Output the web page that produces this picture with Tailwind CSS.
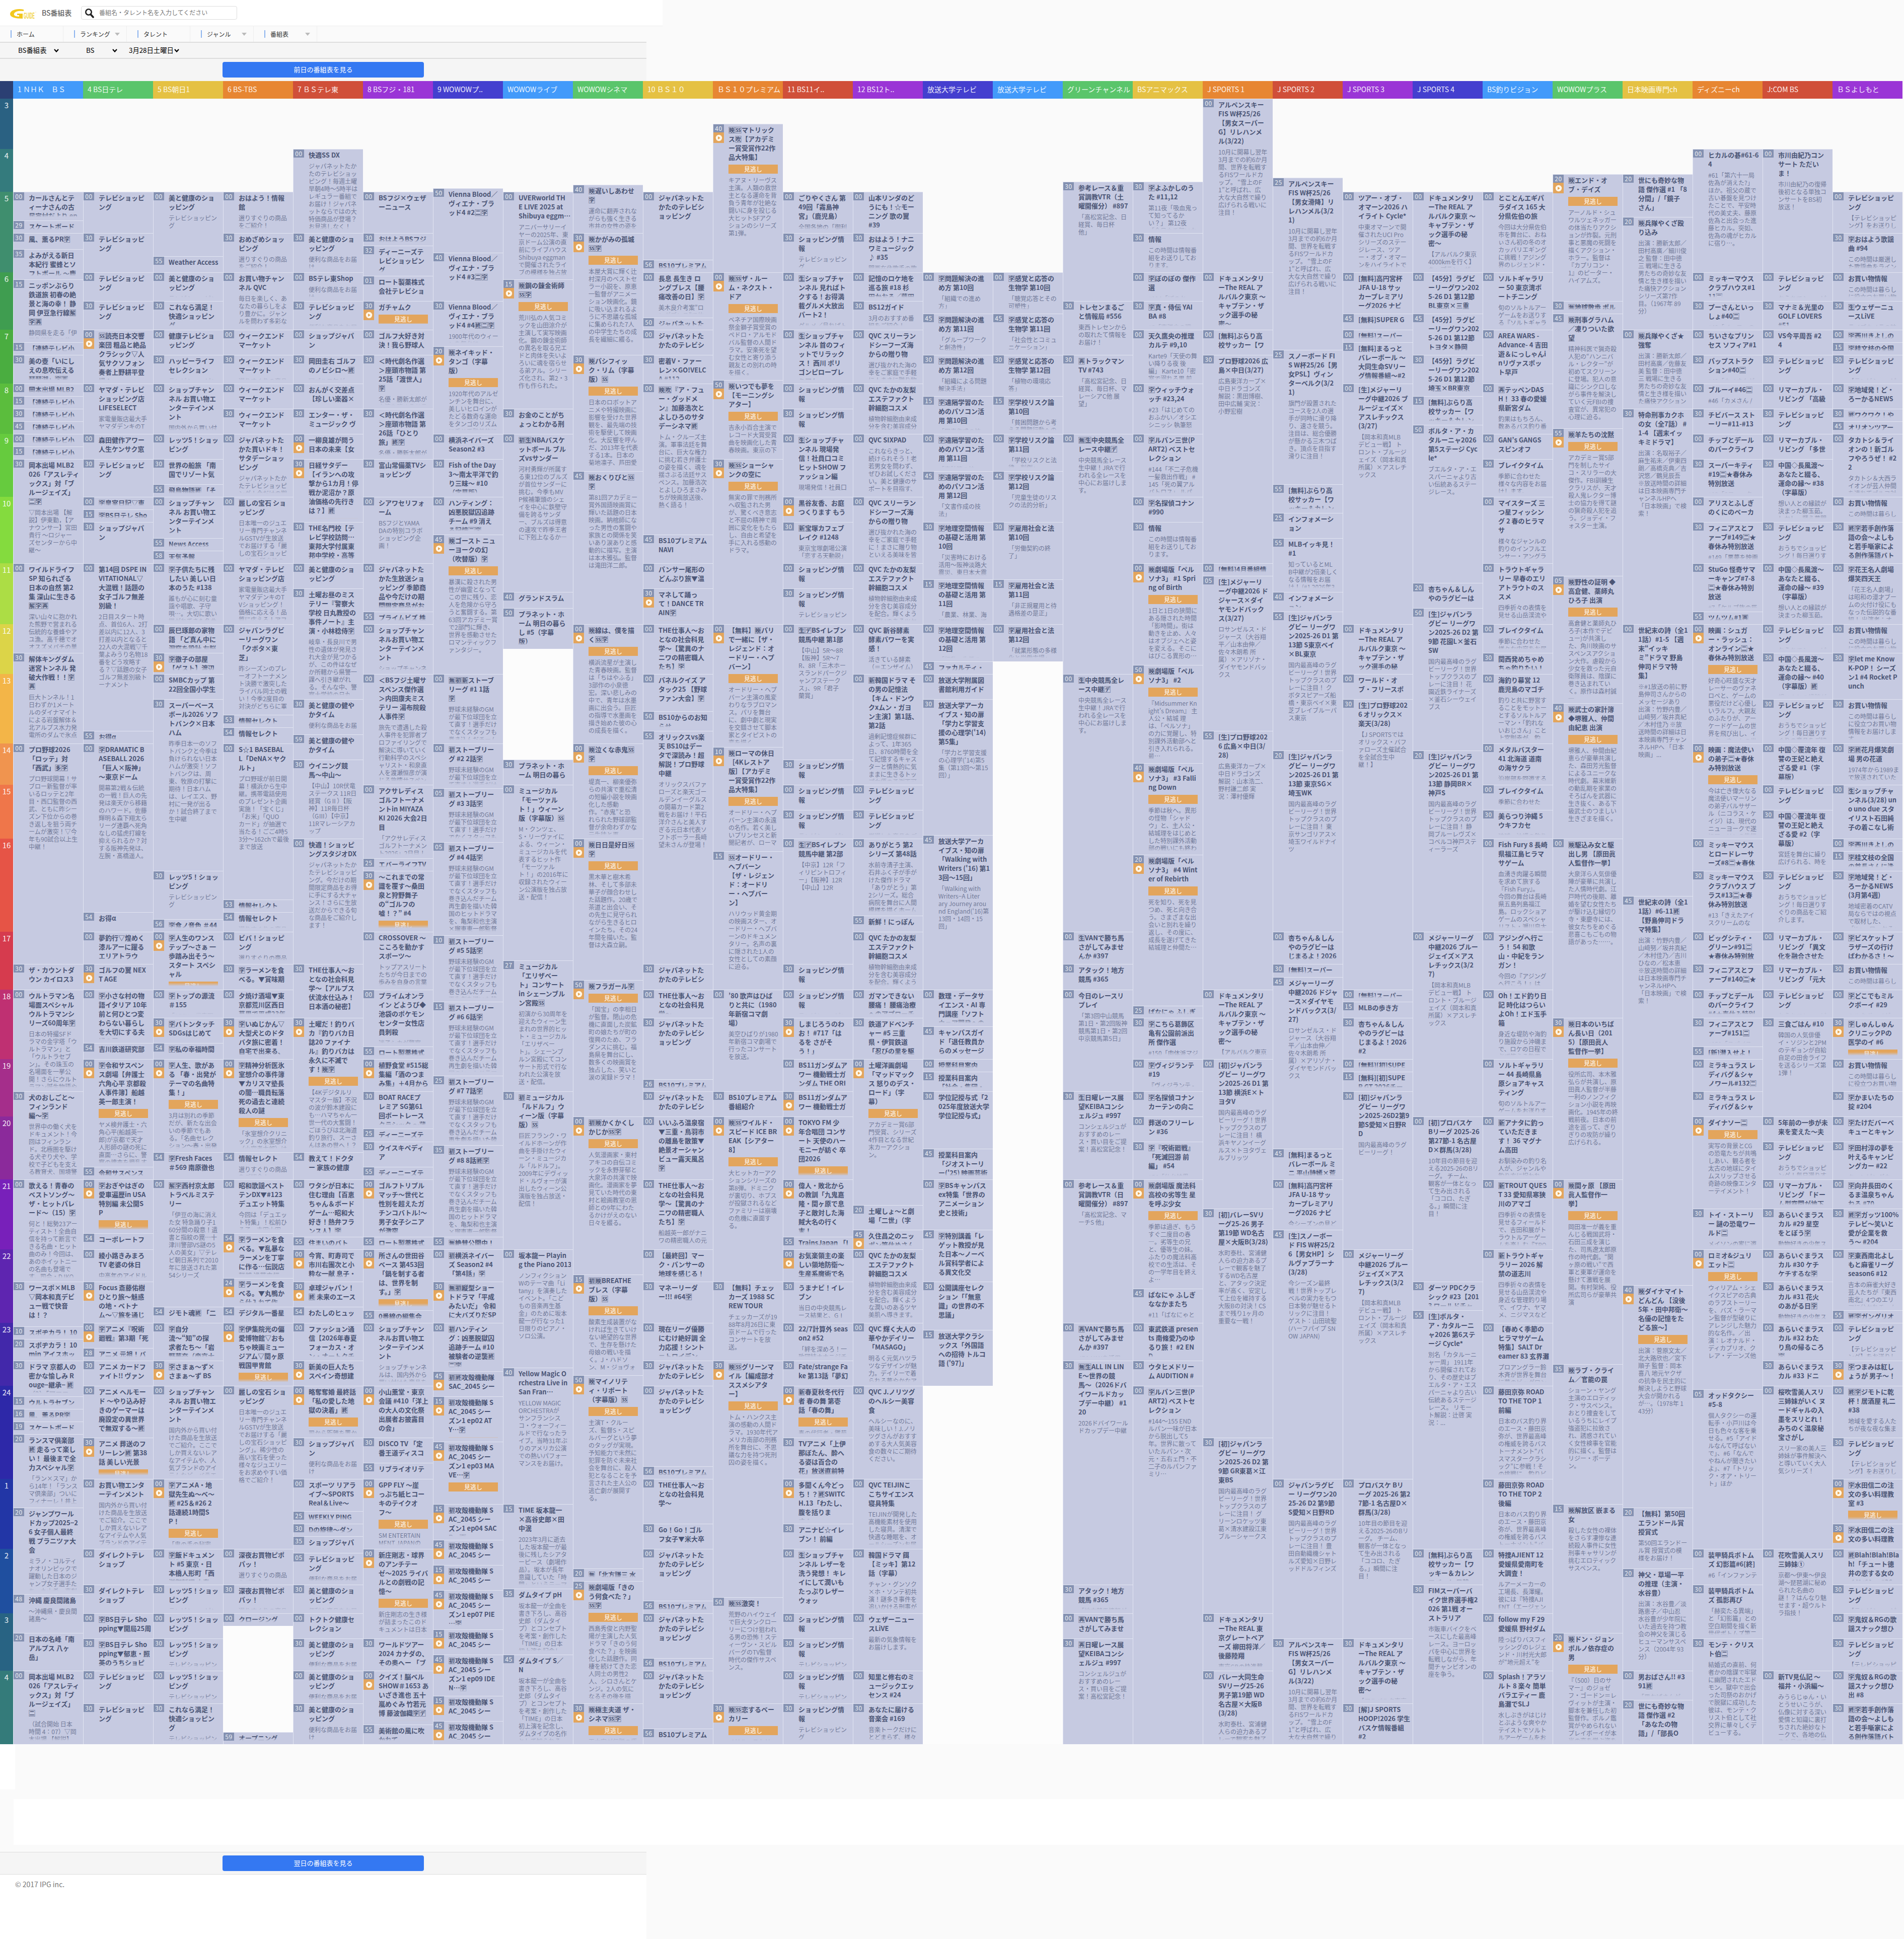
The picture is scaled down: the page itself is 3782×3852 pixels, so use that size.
<!DOCTYPE html>
<html lang="ja">

<head>
    <meta charset="UTF-8">
    <meta name="viewport" content="width=device-width, initial-scale=1.0">
    <script src="https://cdn.jsdelivr.net/npm/@tailwindcss/browser@4"></script>
    <title>BS番組表</title>
</head>

<body class="bg-[#fafafa] font-['Noto_Sans_CJK_JP',sans-serif] text-[#444] w-[3782px] h-[3852px] overflow-hidden">
    <header class="w-[1316px]">
        <div class="h-[51px] bg-white flex items-center pl-5">
            <svg class="w-[52px] h-[20px] mt-1" viewBox="0 0 52 20">
                <path d="M27 1C12-2 0 3 0 10c0 6 10 9 25 9V9H14v3h4v3C9 15 7 12 8 9c2-5 10-6 19-5z" fill="#f2c81e" />
                <text x="27" y="18.5" font-family="Liberation Sans" font-weight="700" font-size="16" textLength="22"
                    lengthAdjust="spacingAndGlyphs" fill="#f2d44a">GUIDE</text>
                <circle cx="51" cy="6" r=".6" fill="#f2c81e" />
            </svg>
            <h1 class="ml-[11px] text-[14px] w-[78px] whitespace-nowrap">BS番組表</h1>
            <div class="w-[310px] h-[27px] border border-[#ddd] rounded flex items-center pl-[6px]">
                <svg class="w-[20px] h-[20px]" viewBox="0 0 20 20" fill="none" stroke="#222">
                    <circle cx="8" cy="8" r="5.7" stroke-width="2.6" />
                    <path d="M12 12.5l5 5.5" stroke-width="3.6" stroke-linecap="round" />
                </svg>
                <span class="ml-[9px] mb-[2px] text-[12px] text-[#777]">番組名・タレント名を入力してください</span>
            </div>
        </div>
        <nav class="h-[32px] flex bg-[#fafafa] border-t border-[#eee] text-[12px] leading-4 text-[#333]">
            <div class="w-[126px] flex items-center border-r border-[#eee] pl-[21px]">
                <i class="w-[2px] h-[15px] bg-[#8db4ee]"></i><span class="ml-[10px]">ホーム</span>
            </div>
            <div class="w-[126px] flex items-center border-r border-[#eee] pl-[21px]">
                <i class="w-[2px] h-[15px] bg-[#8db4ee]"></i><span class="ml-[10px] w-[69px]">ランキング</span>
                <i class="border-x-[5px] border-t-[6px] border-x-transparent border-t-[#bbb]"></i>
            </div>
            <div class="w-[126px] flex items-center border-r border-[#eee] pl-[21px]">
                <i class="w-[2px] h-[15px] bg-[#8db4ee]"></i><span class="ml-[10px]">タレント</span>
            </div>
            <div class="w-[126px] flex items-center border-r border-[#eee] pl-[21px]">
                <i class="w-[2px] h-[15px] bg-[#8db4ee]"></i><span class="ml-[10px] w-[69px]">ジャンル</span>
                <i class="border-x-[5px] border-t-[6px] border-x-transparent border-t-[#bbb]"></i>
            </div>
            <div class="w-[126px] flex items-center border-r border-[#eee] pl-[21px]">
                <i class="w-[2px] h-[15px] bg-[#8db4ee]"></i><span class="ml-[10px] w-[69px]">番組表</span>
                <i class="border-x-[5px] border-t-[6px] border-x-transparent border-t-[#bbb]"></i>
            </div>
        </nav>
    </header>
    <div class="w-[1284px] h-[34px] bg-[#f5f5f5] border-y-2 border-[#ddd] flex items-center pl-[36px] text-[13.33px] text-black">
        <span class="w-[71px]">BS番組表</span>
        <svg class="w-[10px] h-[7px]" viewBox="0 0 10 7"><path d="M1 1l4 4.5L9 1" fill="none" stroke="#000" stroke-width="2.2" /></svg>
        <span class="ml-[54px] w-[52px]">BS</span>
        <svg class="w-[10px] h-[7px]" viewBox="0 0 10 7"><path d="M1 1l4 4.5L9 1" fill="none" stroke="#000" stroke-width="2.2" /></svg>
        <span class="ml-[23px] w-[90px] whitespace-nowrap">3月28日土曜日</span>
        <svg class="w-[10px] h-[7px]" viewBox="0 0 10 7"><path d="M1 1l4 4.5L9 1" fill="none" stroke="#000" stroke-width="2.2" /></svg>
    </div>
    <div class="w-[1284px] h-[44px] bg-[#f5f5f5] flex justify-center pt-[6px]">
        <button class="w-[400px] h-[31px] rounded bg-[#3478f2] text-white text-[13px] pb-[2px]">前日の番組表を見る</button>
    </div>

    <div class="flex h-[35px] text-[14px] text-white/90">
        <div class="w-[26px] bg-[#2b3f73]"></div>
        <div id="channels" class="flex"></div>
    </div>
    <main class="flex h-[3269px]">
        <div id="hours" class="w-[26px] text-white/90 text-[15px] text-center"></div>
        <div id="table" class="flex"></div>
    </main>
    <div class="h-[109px] flex"><div class="w-[30px] h-[90px] bg-white"></div></div>
    <div class="h-[91px] ml-[27px] bg-white"></div>
    <footer class="mt-[14px] w-[1284px]">
        <div class="h-[45px] bg-[#f5f5f5] border-y border-[#ddd] flex justify-center pt-[6px]">
            <button class="w-[400px] h-[31px] rounded bg-[#3478f2] text-white text-[13px] pb-[2px]">翌日の番組表を見る</button>
        </div>
        <p class="h-[140px] bg-white pl-[30px] pt-[9px] text-[14px] text-[#777]">© 2017 IPG inc.</p>
    </footer>
</body>

<script>
    // vertical position of each start time (hhmm, hours run on to 28)
    const T = {
        300: 195, 340: 245, 400: 295, 420: 345, 425: 352, 430: 360, 440: 366, 450: 373, 500: 380, 520: 430, 529: 437, 530: 462, 532: 487, 535: 494, 540: 501, 555: 508, 556: 515,
        600: 540, 601: 547, 615: 554, 630: 597, 645: 622, 650: 630, 700: 654, 715: 679, 720: 687, 725: 694, 730: 704, 750: 754, 800: 761, 815: 786, 830: 811, 845: 836, 850: 843, 855: 850,
        900: 861, 915: 886, 930: 911, 945: 935, 955: 961, 1000: 986, 1015: 1011, 1025: 1018, 1030: 1036, 1045: 1061, 1055: 1068, 1058: 1093,
        1100: 1118, 1105: 1143, 1115: 1150, 1120: 1157, 1130: 1168, 1140: 1175, 1150: 1207, 1155: 1214, 1200: 1239, 1225: 1288, 1230: 1296, 1245: 1313, 1250: 1320,
        1300: 1338, 1330: 1388, 1340: 1396, 1350: 1412, 1353: 1419, 1354: 1444, 1355: 1451, 1359: 1458, 1400: 1476, 1410: 1483, 1420: 1490, 1430: 1508, 1440: 1515,
        1500: 1558, 1505: 1565, 1530: 1608, 1545: 1658, 1600: 1665, 1605: 1672, 1615: 1690, 1620: 1697, 1625: 1704, 1630: 1729, 1645: 1779, 1653: 1786, 1654: 1811, 1655: 1818, 1656: 1825,
        1700: 1850, 1710: 1857, 1727: 1907, 1730: 1914, 1745: 1940, 1750: 1946, 1800: 1965, 1815: 1989, 1825: 1997, 1830: 2021, 1845: 2038, 1854: 2071, 1855: 2078,
        1900: 2103, 1915: 2128, 1925: 2136, 1926: 2143, 1930: 2167, 2000: 2217, 2025: 2241, 2030: 2267, 2035: 2274, 2045: 2281, 2054: 2288, 2055: 2317,
        2100: 2342, 2120: 2393, 2130: 2400, 2145: 2442, 2154: 2449, 2155: 2456, 2200: 2481, 2215: 2531, 2224: 2538, 2230: 2545, 2240: 2552, 2245: 2559, 2254: 2595, 2255: 2602,
        2300: 2627, 2310: 2634, 2315: 2641, 2320: 2659, 2328: 2677, 2330: 2702, 2335: 2709, 2340: 2716, 2345: 2723, 2350: 2731, 2400: 2752, 2405: 2759, 2415: 2773, 2416: 2798, 2419: 2823, 2420: 2848, 2430: 2855, 2445: 2863, 2455: 2905, 2456: 2912,
        2500: 2937, 2515: 2987, 2520: 2994, 2525: 3001, 2530: 3026, 2535: 3051, 2545: 3058, 2600: 3076, 2605: 3084, 2615: 3108, 2620: 3115, 2625: 3140, 2630: 3147, 2635: 3155, 2645: 3158, 2648: 3166, 2650: 3172, 2656: 3179,
        2700: 3204, 2710: 3229, 2715: 3236, 2720: 3243, 2730: 3254, 2745: 3286, 2756: 3293, 2800: 3318, 2815: 3368, 2820: 3376, 2830: 3383, 2845: 3418, 2855: 3425, 2856: 3433, 2859: 3440, 2900: 3464
    };

    const hourColors = {
        3: 'bg-[#2a6182]', 4: 'bg-[#347b7d]', 5: 'bg-[#3f8e6e]', 6: 'bg-[#3f9d50]', 7: 'bg-[#4aad40]', 8: 'bg-[#5bbd3d]', 9: 'bg-[#66cb3e]', 10: 'bg-[#84db3e]', 11: 'bg-[#acdd45]',
        12: 'bg-[#dcd448]', 13: 'bg-[#f3b548]', 14: 'bg-[#f0944f]', 15: 'bg-[#ef764a]', 16: 'bg-[#e65446]', 17: 'bg-[#d63b4e]', 18: 'bg-[#bf3072]', 19: 'bg-[#a52e8b]', 20: 'bg-[#8b2a9b]',
        21: 'bg-[#7820ba]', 22: 'bg-[#5e25b0]', 23: 'bg-[#4228aa]', 24: 'bg-[#2d28a8]', 25: 'bg-[#2236a6]', 26: 'bg-[#1f4f9f]', 27: 'bg-[#286383]', 28: 'bg-[#347b7a]'
    };

    const channelColors = ['bg-[#429afa]', 'bg-[#5ac56b]', 'bg-[#e5c143]', 'bg-[#e78632]', 'bg-[#d04f39]', 'bg-[#9a35d6]', 'bg-[#443fcf]'];

    // one line per program: start;title;description  (* = catch-up available, | = line end)
    const data = [
        ['1 ＮＨＫ　ＢＳ', `
500;カールさんとテ|ィーナさんの古|民家村だより ep
529;スケートボード
530;風、薫るPR🈑
535;よみがえる新日|本紀行 蜜蜂とソ|フトボール 〜鹿
615;ニッポンぶらり|鉄道旅 初春の絶|景と海の幸！ 静|岡 伊豆急行線🈖|🈑🈞;静岡県を走る「伊|豆急行線」の旅
715;【連続テレビ小
730;美の壺「いにし|えの息吹伝える|琵琶湖」🈑🈞
800;岡本出場 MLB2
815;【連続テレビ小
830;【連続テレビ小
845;【連続テレビ小
900;【連続テレビ小
915;【連続テレビ小
930;岡本出場 MLB2|026「アスレティ|ックス」対「ブ|ルージェイズ」|🈔🈑;▽岡本出場 【解|説】伊東勤，【ア|ナウンサー】宮田|貴行 〜ロジャー|ズセンターから中|継〜
1100;ワイルドライフ|SP 知られざる|日本の自然 第2|集 深山に生きる|🈖🈑🈞;深い山々に抱かれ|た熊野で営まれる|伝統的な養蜂やア|ユ漁。高千穂でオ|オスズメバチの巣
1230;解体キングダム|迷宮トンネル 発|破大作戦！！🈑|🈞;巨大トンネル！1|日わずか1メート|ルのダイナマイト|による岩盤解体＆|北アルプス水力発|電所のダムで氷点
1400;プロ野球2026|「ロッテ」対|「西武」🈕🈑;プロ野球開幕！サ|ブロー新監督が率|いるロッテと2年|目・西口監督の西|武、ともに昨シー|ズン下位からの巻|き返しを狙う両チ|ームが激突！▽今|年も90試合以上生|中継！
1730;ザ・カウントダ|ウン カイロス3
1800;ウルトラマン名|場面スペシャル|ウルトラマンシ|リーズ60周年🈑;日本の特撮SFド|ラマの金字塔「ウ|ルトラマン」と|「ウルトラセブ|ン」。その珠玉の|名場面を一挙公|開！さらにウルト|ラマン誕生物語や
1930;犬のおしごと〜|フィンランド|編〜🈑;世界中の働く犬を|ドキュメント！今|回はフィンラン|ド。北極圏を駆け|る犬ぞり犬や、学|校で子どもを支え|る教育犬、国境警
2100;歌える！青春の|ベストソング〜|ザ・ヒットパレ|ード〜（15）🈑;何と！総勢23アー|ティスト！全曲自|信を持って断言で|きる名曲・ヒット|曲のみ！今回は、|あのホイットニー|の名曲も登場で|す。司会・DJKO
2230;ワースポ×MLB|▽岡本和真デビ|ュー戦で快音|は！？
2310;スポヂカラ！ 10
2320;スポヂカラ！ 10|min アイスホッ
2330;ドラマ 京都人の|密かな愉しみ R|ouge−継承− 🈡|（2）「アロエ
2415;ウルトラセブン
2416;風、薫るPR🈑
2419;スケートボード
2420;ランスマ倶楽部|🈡 走るって楽し|い！ 最後まで全|力スペシャル🈑;「ラン×スマ」か|ら14年！「ランス|マ倶楽部」ついに|フィナーレ！井上
2520;ジャンプワール|ドカップ2025−2|6 女子個人最終|戦 プラニツァ大|会;ミラノ・コルティ|ナオリンピックで|躍動した日本のジ|ャンプ女子選手た|ち。丸山希、高梨
2648;沖縄 慶良間諸島;〜沖縄県・慶良間|諸島〜
2720;日本の名峰「南|アルプス 八ヶ|岳」
2800;岡本出場 MLB2|026「アスレティ|ックス」対「ブ|ルージェイズ」|🈔;（試合開始 日本|時間 4：07）▽岡|本出場 【解説】`],
        ['4 BS日テレ', `
500;テレビショッピ|ング
530;テレビショッピ|ング
600;テレビショッピ|ング
630;テレビショッピ|ング
700*;🅍読売日本交響|楽団 粗品と絶品|クラシック▽人|気サクソフォン|奏者上野耕平登|場！
800;ヤマダ・テレビ|ショッピング店|LIFESELECT;家電量販店最大手|ヤマダデンキのT
900;森田健作アワー|人生ケンサク窓
930;テレビショッピ|ング
1000;🈑皇室日記▽東
1015;🈑BS日テレ Sho
1030;ショップジャパ|ン
1100;第14回 DSPE IN|VITATIONAL▽|大混戦！話題の|女子ゴルフ無差|別級！;2日目スタート時|点、首位6人、2打|差以内に12人、3|打差以内となると|22人の大混戦▽千|葉よみうり名物18|番をどう攻略す|る？▽話題の女子|ゴルフ無差別級ト|ーナメント
1355;お得α
1400;🈑DRAMATIC B|ASEBALL 2026|「巨人×阪神」|〜東京ドーム;開幕第2戦＆伝統|の一戦！巨人の先|発は楽天から移籍|のハワード。佐藤|輝明＆森下翔太ら|リーグ連覇へ死角|なしの猛虎打線を|抑えられるか？対|する阪神先発は、|左腕・髙橋遥人。
1654;お得α
1700;夢釣行▽煌めく|漆ルアーに躍る|エリアトラウ
1730*;ゴルフの翼 NEX|T AGE
1800;🈑小さな村の物|語イタリア 10年|前と何ひとつ変|わらない暮らし|を大切にする夫|婦の夢
1854;吉川鉄道研究部
1900*;🈑令和サスペン|ス劇場【弁護士|六角心平 京都殺|人事件簿】船越|英一郎主演！;ヤメ検弁護士・六|角心平(船越英一|郎)が京都で天才|人形師の謎の死に|直面…さらに、警|察の捜査を攪乱す
2055;令和サスペンス
2100*;🈑おぎやはぎの|愛車遍歴in USA|特別編 未公開S|P
2154;コーポレートフ
2200;綾小路きみまろ|TV 老婆の休日;中高年のアイドル
2230*;Focus 斎藤佑樹|ひとり旅〜魅惑|の地・ベトナ|ム〜▽旅を通じ
2300*;🈑アニメ『呪術|廻戦』第3期「死
2328;アニメ 元祖！バ
2330;アニメ カードフ|ァイト!! ヴァン
2400;アニメ ヘルモー|ド 〜やり込み好|きのゲーマーは|廃設定の異世界|で無双する〜🈡
2430*;アニメ 葬送のフ|リーレン🈡 第38|話 美しい光景
2500;お買い物エンタ|ーテインメント;国内外から買い付|けた商品を生放送|でご紹介。ここで|しか買えないレア|なアイテムや人気|ブランドのアイテ
2600;ダイレクトテレ|ショップ
2630;ダイレクトテレ|ショップ
2700;🈑BS日テレ Sho|pping▼開局25周
2730;🈑BS日テレ Sho|pping▼郁恵・照|英のうちショピ
2800;テレビショッピ|ング
2830;テレビショッピ|ング`],
        ['5 BS朝日1', `
500;美と健康のショ|ッピング;テレビショッピン|グ
555;Weather Access
600;美と健康のショ|ッピング;テレビショッピン
630;これなら満足！|快適ショッピン|グ
700;健康テレビショ|ッピング
730;ハッピーライフ|セレクション;テレビショッピン
800;ショップチャン|ネル お買い物エ|ンターテインメ|ント;国内外から買い付
900;レッツ5！ショッ|ピング
930;世界の船旅 「南|国でリゾート気
955;飛鳥物語🈡 「そ
1000;ショップチャン|ネル お買い物エ|ンターテインメ|ント
1055;News Access
1058;天気予報
1100;🈑子供たちに残|したい 美しい日|本のうた #138;誰もが心に刻む童|謡や唱歌、子守|唄…。大切に歌い|継がれてきた名曲
1200;辰巳琢郎の家物|語 「ど真ん中に|洞窟を設計 左脳
1230*;🈑徹子の部屋|【ゲスト】渡辺
1300;SMBCカップ 第|22回全国小学生
1330;スーパーベース|ボール2026 ソフ|トバンク×日本|ハム;昨季日本一のソフ|トバンクと今季は|負けられない日本|ハムが激突！ソフ|トバンクは、周|東、牧原の打撃に|期待！日本ハム|は、レイエス、野|村に一発が出る|か！試合終了まで|生中継
1630;レッツ5！ショッ|ピング;テレビショッピン|グ
1656;🈑食ノ音色 ＃44
1700*;🈑人生のワンス|テップ〜さぁ 一|歩踏み出そう〜|スタート スペシ|ャル
1800;🈑トップの源流|＃155;「APEX」代表取
1830*;🈑バトンタッチ|SDGsはじめて
1854;🈑私の幸福時間
1900*;🈑人生、歌があ|る 「春・出発が|テーマの名曲特|集！」;3月は別れの季節|だが、新たな出会|いの季節でもあ|る。「名曲セレク|ション〜春・出発
2054;🈑Fresh Faces|＃569 南原徹也
2100;🈖🈑西村京太郎|トラベルミステ|リー;「伊豆の海に消え|た女 特急踊り子1|60分間の殺意！遺|書と指紋の罠…十|津川警部VS謎の5|人の美女」▽テレ|ビ朝日系列で2010|年に放送された第|54シリーズ
2254;ジモト魂🈡 「二
2300;🈑自分|流〜“知”の探|求者たち〜「岩|野華奈（帝京大
2330*;🈑さまぁ〜ず×|さまぁ〜ず BS
2400;ショップチャン|ネル お買い物エ|ンターテインメ|ント;国内外から買い付|けた商品を生放送|でご紹介。ここで|しか買えないレア|なアイテムや、人|気ブランドのアイ|テムなど、バラエ
2500*;🈑アニメA・地|獄先生ぬ〜べ〜|🈡 #25＆#26 2|話連続1時間S|P！;「鬼の手の秘密
2600;🈑飯ドキュメン|ト #5 東京・日|本橋人形町「西|洋御料理 小春
2630;レッツ5！ショッ|ピング;テレビショッピン
2700;レッツ5！ショッ|ピング
2730;レッツ5！ショッ|ピング;テレビショッピン
2800;レッツ5！ショッ|ピング;テレビショッピン
2830;これなら満足！|快適ショッピン|グ;テレビショッピン`],
        ['6 BS-TBS', `
500;おはよう！情報|館;選りすぐりの商品|をご紹介！
530;おめざめショッ|ピング;選りすぐりの商品|をご紹介！
600;お買い物チャン|ネル QVC;毎日を楽しく、あ|なたの暮らしをよ|り豊かに。ジャン|ルを問わず多彩な
700;ウィークエンド|マーケット
730;ウィークエンド|マーケット;選りすぐりの商品
800;ウィークエンド|マーケット
830;ウィークエンド|マーケット
900;ジャパネットた|かた買いドキ！|サタデーショッ|ピング;ジャパネットたか|たテレビショッピ|ング！今だけの期
1000;麗しの宝石 ショ|ッピング;日本唯一のジュエ|リー専門チャンネ|ルGSTVが生放送|でお届けする「麗|しの宝石ショッピ|ング」。稀少性の
1100;ヤマダ・テレビ|ショッピング店;家電量販店最大手|ヤマダデンキのT|Vショッピング！|価格に応える！品|質に応える！アフ
1200;ジャパンラグビ|ーリーグワン|「クボタ×東|芝」;昨シーズンのプレ|ーオフトーナメン|ト決勝で激突した|ライバル同士の戦|い！今季2度目の|対決がどちらに軍
1353;情報セレクト
1354;情報セレクト
1400;S☆1 BASEBAL|L「DeNA×ヤク|ルト」;プロ野球が前日開|幕！横浜から生中|継。携帯電話使用|のプレゼント企画|実施！「宝くじ」|「お米」「QUO|カード」が抽選で|当たる！ごご4時5|3分〜162chで最後|まで放送
1653;情報セレクト
1654;情報セレクト;選りすぐりの商品
1700;ビバ！ショッピ|ング;選りすぐりの商品
1730;🈑ラーメンを食|べる。▼賞味期
1800;夕焼け酒場▼東|京都荒川区西日|暮里で平成23年
1830*;🈑いぬじかん▽|大型犬とのドタ|バタ旅に密着！|自宅で出来る、
1900*;🈑精神分析医氷|室想介の事件簿|▼カリスマ塾長|の闇…職員転落|死の過去と連続|殺人の謎;「氷室想介クリニ|ック」の氷室想介|（小宮孝太郎）は
2054;情報セレクト;選りすぐりの商品|をご紹介！
2100;昭和歌謡ベスト|テンDX▼#123|デュエット特集;今回は「デュエッ|ト特集」！松前ひ|ろ子、吉田山田
2154*;🈑ラーメンを食|べる。▼乱暴な|ラーメンを丁寧|に作る…伝説店|麺都 浅草来福
2224*;🈑ラーメンを食|べる。▼丸鴨か|ら仕入れて作
2254;デジタル一番星
2300*;🈑伊集院光の偏|愛博物館▽おも|ちゃ映画ミュー|ジアム▽関ヶ原|戦国甲冑館
2400;麗しの宝石 ショ|ッピング;日本唯一のジュエ|リー専門チャンネ|ルGSTVが生放送|でお届けする「麗|しの宝石ショッピ|ング」。稀少性の|高い宝石を使った|様々なジュエリー|をお求めやすい価|格でご紹介！
2600;深夜お買物ピポ|パッ！;選りすぐりの商品|をご紹介！
2630;深夜お買物ピポ|パッ！;選りすぐりの商品
2700;クロージング
2710;
2859;オープニング`],
        ['7 ＢＳテレ東', `
400;快適SS DX;ジャパネットたか|たのテレビショッ|ピング！毎週土曜|早朝4時〜5時半は|レギュラー番組で|お届け！ジャパネ|ットならではの大|特価商品が登場？|お見逃しなく！
530;美と健康のショ|ッピング;便利な商品をお届|け
600;BSテレ東Shop;便利な商品をお届|け
630;テレビショッピ|ング;便利な商品をお届
700;ショップジャパ|ン
730;岡田圭右 ゴルフ|のノビシロ〜🈡;▽ゴルフ年が
800;おんがく交差点|【珍しい楽器×
830;エンター・ザ・|ミュージック ヴ
900*;一柳良雄が問う|日本の未来【女
930*;日経サタデー|【イランへの攻|撃から1カ月！停|戦か泥沼か？原|油価格の先行き|は？】🈡
1030;THE名門校【テ|レビ学校訪問…|東邦大学付属東|邦中学校・高等
1100;美と健康のショ|ッピング
1130;土曜お昼のミス|テリー『警察大|学校 日丸教授の|事件ノート』主|演・小林稔侍🈑;岐阜・長良川で男|性の遺体が発見さ|れ大金が見つかる|が、この件はなぜ|か所轄から県警一|課へ引き継がれ|る。そんな中、警|察大学校の日丸
1330;美と健康の健や|かタイム;便利な商品をお届
1359;美と健康の健や|かタイム
1430;ウイニング競|馬〜中山〜;【中山】10R伏竜|ステークス 11R日|経賞（GⅡ）【阪|神】11R毎日杯|（GⅢ）【中京】|11Rマレーシアカ|ップ
1600;快適！ショッピ|ングスタジオDX;ジャパネットたか|たテレビショッピ|ング。今だけの期|間限定商品をお得|に手にする大チャ|ンス！さらに生放|送だからできる旬|な商品をご紹介し|ます！
1730;THE仕事人〜お|となの社会科見|学〜【アルプス|伏流水仕込み！|日本酒の秘密】
1830*;土曜だ！釣りバ|カ『釣りバカ日|誌20 ファイナ|ル』釣りバカは|永久に不滅で|す！🈙🈑;【4Kデジタルリ|マスター版】不況|の波が鈴木建設に|も…ハマちゃん一|世一代の大奮闘！|ごほうびは北海道|釣り旅行、スーさ|んはあの世へ！？
2054;教えて！ドクタ|ー 家族の健康
2100;ワタシが日本に|住む理由【百恵|ちゃん＆ボード|ゲーム…昭和大|好き！熱弁フラ|ンス人】🈑
2155;住まいのバト
2200*;今宵、町寿司で|市川右團次と小|粋な一献 息子・
2230*;卓球ジャパン！|🈡 未来のエース
2254;わたしのヒュッ
2300;ファッション通|信【2026年春夏|フォーカス・オ|ン・オートクチ
2330*;新美の巨人たち|スペイン奇想建
2400*;略奪奪婚 最終話|「私の愛した地|獄の決着」🈡;司から距離を置か
2430;ショップジャパ|ン;便利な商品をお届|け
2500;スポーツ リアラ|イブ〜SPORTS|Real＆Live〜
2525;WEEKLY PING
2530;Dの旋律〜ダン
2535;ショップジャパ
2605;テレビショッピ|ング;便利な商品をお届
2630;美と健康のショ|ッピング;便利な商品をお届
2700;トクトク健康セ|レクション
2730;美と健康のショ|ッピング;便利な商品をお届
2800;美と健康のショ|ッピング;便利な商品をお届
2830;美と健康のショ|ッピング;便利な商品をお届|け`],
        ['8 BSフジ・181', `
500;BSフジ×ウェザ|ーニュース
530;おはようBSフジ
532;ディーニーズテ|レビショッピン|グ
601;ロート製薬株式|会社テレビショ
630*;ガチャムク
700;ゴルフ大好き対|決！我ら野球人
730;＜時代劇名作選|＞座頭市物語 第|25話「渡世人」|🈑;名優・勝新太郎が|主演を務めるドラ
830;＜時代劇名作選|＞座頭市物語 第|26話「ひとり|旅」🈡🈑;名優・勝新太郎が
930;富山常備薬TVシ|ョッピング
1000;シアワセリフォ|ーム;BSフジとYAMA|DAの特別コラボ|ショッピング企|画！
1100;ジャパネットた|かた生放送ショ|ッピング 季節商|品や今だけの期|間限定商品がお
1155;プライムビズ 株
1200;ショップチャン|ネルお買い物エ|ンターテインメ|ント;ショップチャンネ
1300;＜BSフジ土曜サ|スペンス傑作選|＞内田康夫ミス|テリー 湯布院殺|人事件🈑;旅先で遭遇した殺|人事件を犯罪者プ|ロファイリングで|解決に導いていく|行動科学のスペシ|ャリスト・和泉直|人を渡瀬恒彦が演|じる旅情サスペン
1500;アクサレディス|ゴルフトーナメ|ントin MIYAZA|KI 2026 大会2日|目;「アクサレディス|ゴルフトーナメン|ト2026」2日目！
1625;エバーライフTV
1630*;〜これまでの常|識を覆す〜桑田|泉と狩野舞子|の“ゴルフの|嘘！？” #4
1700;CROSSOVER 〜|こころを動かす|スポーツ〜;トップアスリート|たちが今日までの|歩みを自身の言葉
1800;プライムオンラ|イン どようび◆|池袋のポケモン|センター女性店|員刺殺;迷子シカが警察
1855;ロート製薬株式
1900*;植野食堂 #515総|集編「酒のつま|み集」＋4月から
1930;BOAT RACEプ|レミア SG第61|回ボートレース|クラシック 〜蒲
2025;ディーニーズテ
2030;ウイスキペディ|ア
2055;ディーニーズテ
2100*;ゴルフトリプル|マッチ〜世代と|性別を超えたガ|チンコバトル!〜|男子女子シニア|が激突
2155;ロート製薬株式
2200*;所さんの世田谷|ベース 第453回|「鍋を制する者|は、世界を制|す。」🈑
2255;0番線の編集会
2300;ショップチャン|ネルお買い物エ|ンターテインメ|ント;ショップチャンネ|ルは、国内外から|買い付けた商品を
2400*;小山薫堂・東京|会議 #410「洋上|の大人の文化祭|出展者お披露目|の会」
2430;DISCO TV 「定|番王道ディスコ
2455;リブライオリテ
2500*;GPP FLY 〜崖|っぷち紙ヒコー|キのテイクオ|フ〜;SM ENTERTAIN|MENT JAPANの
2600*;新庄剛志・球界|のアンチテー|ゼ〜2025 ライバ|ルとの劇戦の記|憶〜;新庄剛志の生き様|が詰まったこのド|キュメントは日本|ハムファイターズ
2730;ワールドツアー|2024 カナダの、|その奥へー 「ブ
2800*;クイズ！脳ベル|SHOW＃1653 あ|いざき進也 五十|嵐めぐみ 竹若元|博 藤波伽織🈑🈓
2855;美術館の風に吹|かれて`],
        ['9 WOWOWプ..', `
450;Vienna Blood／|ヴィエナ・ブラ|ッド4 #2🈔🈑
540;Vienna Blood／|ヴィエナ・ブラ|ッド4 #3🈔🈑
630;Vienna Blood／|ヴィエナ・ブラ|ッド4 #4🈡🈔🈑;1900年代のウィー|ンを舞台に
720*;🈙ネイキッド・|タンゴ（字幕|版）;1920年代のアルゼ|ンチンを舞台に、|美しいヒロインが|たどる数奇な運命|をタンゴのリズム|に乗せて耽美的に
900;横浜ネイバーズ|Season2 #3
930;Fish of the Day|3〜南太平洋で釣|り三昧〜 #10|（字幕版）
1000;ハンティング：|凶悪脱獄囚追跡|チーム #9 消え|る記憶🈔🈑
1045*;🈙ゴースト ニュ|ーヨークの幻|（吹替版）🈑;暴漢に殺された男|性が幽霊となって|この世に残り、恋|人を危険から守ろ|うと奮闘する。第|63回アカデミー賞|で2部門に輝き、|世界を感動させた|ロマンティックフ|ァンタジー。
1300;🈚🈠🈟ストーブ|リーグ #1 1話|🈑;野球未経験のGM|が最下位球団を立|て直す！選手だけ|でなくスタッフも|巻き込んだチーム
1400;🈠ストーブリー|グ #2 2話🈑;野球未経験のGM|が最下位球団を立|て直す！選手だけ
1505;🈠ストーブリー|グ #3 3話🈑;野球未経験のGM|が最下位球団を立|て直す！選手だけ|でなくスタッフも
1605;🈠ストーブリー|グ #4 4話🈑;野球未経験のGM|が最下位球団を立|て直す！選手だけ|でなくスタッフも|巻き込んだチーム|再生劇を描いた韓|国のヒットドラマ|を、亀梨和也主演|×瑠東東一郎監督
1710;🈠ストーブリー|グ #5 5話🈑;野球未経験のGM|が最下位球団を立|て直す！選手だけ|でなくスタッフも|巻き込んだチーム|再生劇を描いた韓
1815;🈠ストーブリー|グ #6 6話🈑;野球未経験のGM|が最下位球団を立|て直す！選手だけ|でなくスタッフも|巻き込んだチーム|再生劇を描いた韓|国のヒットドラマ
1925;🈠ストーブリー|グ #7 7話🈑;野球未経験のGM|が最下位球団を立|て直す！選手だけ|でなくスタッフも|巻き込んだチーム|再生劇を描いた韓
2035;🈠ストーブリー|グ #8 8話🈡🈑;野球未経験のGM|が最下位球団を立|て直す！選手だけ|でなくスタッフも|巻き込んだチーム|再生劇を描いた韓|国のヒットドラマ|を、亀梨和也主演|×瑠東東一郎監督
2155;🈚絶賛公開中！
2200;🈠横浜ネイバー|ズ Season2 #4|「第4話」🈑
2230*;🈚🈠縦型ショー|トドラマ「平成|みたいだ」 令和|に大バズりだSP
2300;🈠ハンティン|グ：凶悪脱獄囚|追跡チーム #10|被験者の逆襲🈡|🈔🈑
2345*;🈠🈡攻殻機動隊|SAC_2045 シー
2415*;🈠攻殻機動隊 S|AC_2045 シー|ズン1 ep02 AT|Y…🈑
2445*;🈠攻殻機動隊 S|AC_2045 シー|ズン1 ep03 MA|VE…🈑
2515*;🈠攻殻機動隊 S|AC_2045 シー|ズン1 ep04 SAC|R…🈑
2545*;🈠攻殻機動隊 S|AC_2045 シー
2615*;🈠攻殻機動隊 S|AC_2045 シー
2645*;🈠攻殻機動隊 S|AC_2045 シー|ズン1 ep07 PIE|…🈑
2715*;🈠攻殻機動隊 S|AC_2045 シー
2745*;🈠攻殻機動隊 S|AC_2045 シー|ズン1 ep09 IDE|N…🈑
2815*;🈠攻殻機動隊 S|AC_2045 シー
2845*;🈠攻殻機動隊 S|AC_2045 シー`],
        ['WOWOWライブ', `
500;UVERworld TH|E LIVE 2025 at|Shibuya eggm…;アニバーサリーイ|ヤーの2025年、東|京ドーム公演の直|前にライブハウス|Shibuya eggman|で開催されたライ|ブの模様を独占放
615*;🈙鋼の錬金術師|🅍🈑;荒川弘の人気コミ|ックを山田涼介が|主演して実写映画|化。鋼の錬金術師|の異名を取る兄エ|ドと肉体を失いよ|ろいに魂を宿らせ|る弟アル。シリー|ズ化され、第2・3|作も作られた。
830;お金のことがち|ょっとわかる刑
900;🈠🈢NBAバスケ|ットボール ブル|ズvsサンダー;河村勇輝が所属す|る東12位のブルズ|が首位サンダーに|挑む。今季もMV|P候補筆頭のシェ|イを中心に鉄壁守|備を誇るサンダ|ー、ブルズは得意|の速攻で昨季王者|に下剋上なるか―
1140;グランドスラム
1150;プラネット・ホ|ーム 明日の暮ら|し #5（字幕|版）
1225;
1430;プラネット・ホ|ーム 明日の暮ら
1500;ミュージカル|「モーツァル|ト！」ウィーン|版（字幕版）🅍;M・クンツェ、|S・リーヴァイに|よる、ウィーン・|ミュージカルを代|表するヒット作|「モーツァル|ト！」の2016年に|収録されたウィー|ン公演版を独占放|送・配信！
1727;ミュージカル|「エリザベー|ト」コンサート|in シェーンブル|ン宮殿🅍;初演から30周年を|迎えたウィーン生|まれの世界的ヒッ|ト・ミュージカル|「エリザベー|ト」。シェーンブ|ルン宮殿にてコン|サート形式で行な|われた公演を放|送・配信。
1930;🈠ミュージカル|「ルドルフ」ウ|ィーン版（字幕|版）🅍;巨匠フランク・ワ|イルドホーンが作|曲を手掛けたウィ|ーン・ミュージカ|ル「ルドルフ」。|2009年にデヴィッ|ド・ルヴォーが演|出したウィーン公|演版を独占放送・|配信！
2200;坂本龍一 Playin|g the Piano 2013;ノンフィクション|Wのテーマ曲「Li|tany」を演奏した|イベント。「こど|もの音楽再生基|金」のために坂本|龍一が行なった1|日限りのピアノ・|ソロ公演。
2340;Yellow Magic O|rchestra Live in|San Fran…;YELLOW MAGIC|ORCHESTRAが|サンフランシス|コ・ウォーフィー|ルドで行なったラ|イブ。当時31年ぶ|りのアメリカ公演|での熱いパフォー|マンスをお届け。
2515;TIME 坂本龍一|×高谷史郎×田|中泯;2023年3月に逝去|した坂本龍一が最|後に残したシアタ|ーピース（劇場作|品）。坂本が長年|意識していた「時|間」というテーマ
2635;ダムタイプ pH;坂本龍一が全曲を|書き下ろし、高谷|史郎（ダムタイ|プ）とコンセプト|を考案・創作した|「TIME」の日本|初上演を記念し、
2745;ダムタイプ S／|N;坂本龍一が全曲を|書き下ろし、高谷|史郎（ダムタイ|プ）とコンセプト|を考案・創作した|「TIME」の日本|初上演を記念し、|ダムタイプの名作|として知られる`],
        ['WOWOWシネマ', `
440;🈙遅いしあわせ|🈑;運命に翻弄されな|がらも強く生きる|市井の女性の姿を
530*;🈙かがみの孤城|🅍🈑;本屋大賞に輝く辻|村深月のベストセ|ラー小説を、原恵|一監督がアニメー|ション映画化。鏡|に吸い込まれるよ|うに不思議な孤城|に集められた7人|の中学生たちの成|長を繊細に綴る。
730*;🈙パシフィッ|ク・リム（字幕|版）🅍;日本のロボットア|ニメや特撮映画に|影響を受けた世界|観を、最先端の技|術を駆使して映画|化。大反響を呼ん|だ、2013年を代表|する1本。日本の|菊地凛子、芦田愛
945;🈙おくりびと🅍|🈑;第81回アカデミー|賞外国語映画賞に|輝いた話題の日本|映画。納棺師にな|った男性の奮闘や|家族との関係を笑|いあり涙ありと感|動的に描写。主演|は本木雅弘。監督|は滝田洋二郎。
1200*;🈙線は、僕を描|く🅍🈑;横浜流星が主演し|た青春映画。監督|は「ちはやふる」|3部作の小泉徳|宏。深い悲しみの|中で、青年は水墨|画に出会う。巨匠|の指導で水墨画を|描き始めた彼の心|の成長を描く。
1400*;🈙泣くな赤鬼🅍|🈑;堤真一、柳楽優弥|らの共演で重松清|の短編小説を映画|化した感動|作。“赤鬼”と恐|れられた野球部監|督が余命わずかな|元生徒と再
1600*;🈙日日是好日🅍|🈑;黒木華と樹木希|林、そして多部未|華子が顔合わせし|た話題作。20歳で|茶道と出会い、そ|の先生に見守られ|ながら生きるヒロ|インたち。その24|年間を描いた。監|督は大森立嗣。
1750*;🈙フラガール🈑;「国宝」の李相日|が監督。閉山の危|機に直面した炭鉱|町の娘たちが町の|復興のため、フラ|ダンスに挑む。福|島県を舞台にし、|数多くの映画賞を|独占した、笑いと|涙の実録ドラマ！
2000*;🈠🈙かくかくし|かじか🅍🈑;人気漫画家・東村|アキコの自伝コミ|ックを永野芽郁と|大泉洋の共演で映|画化。漫画家を夢|見ていた時代の東|村と絵画教室の恩|師との9年にわた|るかけがえのない|日々を綴る。
2215*;🈠🈙BREATHE|ブレス（字幕|版）🅍;酸素生成装置がな|ければ生きていけ|ない絶望的な世界|で、生存を懸けた|母娘の戦いを描|く。J・ハドソ|ン、M・ジョヴォ
2350*;🈙マイノリテ|ィ・リポート|（字幕版）🅍;主演T・クルー|ズ、監督S・スピ|ルバーグという夢|のタッグが実現。|予知能力で未然に|犯罪を防ぐ未来社|会を舞台に、殺人|犯となることを予|言された主人公の|逃亡劇が展開す|る。
2620;🈚「北方謙三 水
2625*;🈙劇場版「きの|う何食べた？」|🅍🈑;西島秀俊と内野聖|陽が主演した人気|ドラマ「きのう何|食べた？」を映画|化した話題作。同|棲を続けてきた恋|人同士の男性2|人、シロさんとケ|ンジ。2人の気に|なるその後を描
2830*;🈙極主夫道 ザ・|シネマ🅍🈑;玉木宏が伝説の極`],
        ['10 ＢＳ１０', `
500;ジャパネットた|かたのテレビシ|ョッピング
556;BS10プレミアム
600;長息 長生き ロ|ングブレス【腰|痛改善の日】🈑;美木良介考案”ロ|ングブレス”で体
650;ジャパネットた
700;ジャパネットた|かたのテレビシ
730;密着V・ファー|レン×GO!VELC|A #112
800;🈙🈥『ア・フュ|ー・グッドメ|ン』加藤浩次と|よしひろのサタ|デーシネマ🈡;トム・クルーズ主|演。軍事法廷を舞|台に、巨大な権力|に挑む若き弁護士|の姿を描く、魂を|揺さぶる法廷サス|ペンス。加藤浩次|とよしひろまさみ|ちが映画放送後、|熱く語る！
1045;BS10プレミアム|NAVI
1100;パンサー尾形の|どんぶり旅▼温
1130*;マネして踊っ|て！DANCE TR|AIN🈑
1200;THE仕事人〜お|となの社会科見|学〜【驚異のナ|ニワの精密職人|たち】🈑
1300;パネルクイズ ア|タック25 【野球|ファン大会】🈑
1350;BS10からのお知|らせ
1355;オリックスvs楽|天 BS10はデー|タで深読み！超|解説！プロ野球|中継;オリックスバファ|ローズと楽天ゴー|ルデンイーグルス|の開幕カード第2|戦をお届け！平石|洋介さんと美人す|ぎる元日本代表ソ|フトボーラー長﨑|望未さんが登場！
1730;ジャパネットた|かたのテレビシ
1800;THE仕事人〜お|となの社会科見|学〜
1830;ジャパネットた|かたのテレビシ|ョッピング
1926;BS10プレミアム
1930;ジャパネットた|かたのテレビシ
2000;いいふろ温泉宿|▼三重・鳥羽市|の離島を散策▼|絶景オーシャン|ビュー露天風呂|🈑
2100;THE仕事人〜お|となの社会科見|学〜【驚異のナ|ニワの精密職人|たち】🈑;船越英一郎がナニ|ワの精密職人の元
2200;【最終回】マー|ク・パンサーの|地球を感じる！
2230;マネーリーダ|ー!!! #64🈑
2300;現在リーグ優勝|にむけ絶好調 全|力応援！シント|＝トロイデン
2330;ジャパネットた|かたのテレビシ
2400;ジャパネットた|かたのテレビシ|ョッピング
2456;BS10プレミアム
2500;THE仕事人〜お|となの社会科見|学〜
2530;Go！Go！ゴル|フ女子▼米大卒
2600;ジャパネットた|かたのテレビシ|ョッピング
2656;BS10プレミアム
2700;ジャパネットた|かたのテレビシ|ョッピング
2756;BS10プレミアム
2800;ジャパネットた|かたのテレビシ|ョッピング
2856;BS10プレミアム`],
        ['ＢＳ１０プレミアム', `
340*;🈙🅍マトリック|ス🈥【アカデミ|ー賞受賞作22作|品大特集】;キアヌ・リーヴス|主演。人類の救世|主となる運命を背|負う青年が壮絶な|闘いに身を投じる|大ヒットSFアク|ションのシリーズ|第1弾。
600*;🈙🅍ザ・ルー|ム・ネクスト・|ドア;ベネチア国際映画|祭金獅子賞受賞の|ペドロ・アルモド|バル監督の人間ド|ラマ。安楽死を望|む女性と寄り添う|親友との別れの時|を描く。
750*;🈙いつでも夢を|【モーニングシ|アター】;吉永小百合主演で|レコード大賞受賞|曲を映画化した青|春映画。東京の下
930*;🈙🅍ショーシャ|ンクの空に;無実の罪で刑務所|へ収監された男|が、驚くべき意志|と不屈の精神で周|囲に変化をもたら|し、自由と希望を|手に入れる感動の|ドラマ。
1200*;【無料】🈙パリ|で一緒に【ザ・|レジェンド：オ|ードリー・ヘプ|バーン】;オードリー・ヘプ|バーン主演の風変|わりなラブロマン|ス。パリを舞台|に、劇中劇と現実|を交錯させて脚本|家とタイピストの|恋を描く
1410*;🈙ローマの休日|［4Kレストア|版］【アカデミ|ー賞受賞作22作|品大特集】;オードリー・ヘプ|バーン主演の永遠|の名作。若く美し|いプリンセスと新|聞記者が、ローマ
1615;🅍オードリー・|ヘプバーン|【ザ・レジェン|ド：オードリ|ー・ヘプバー|ン】;ハリウッド黄金期|の映画スター、オ|ードリー・ヘプバ|ーンのドキュメン|タリー。名声の裏|に隠された1人の|女性としての素顔|に迫る。
1800;’80 歌声はひば|りと共に（1980|年新宿コマ劇|場）;美空ひばりが1980|年新宿コマ劇場で|行ったコンサート|を放送。
1930;BS10プレミアム|番組紹介
2000*;🈙🅍ワイルド・|スピード ICE BR|EAK【シアター|8】;大ヒットカーアク|ションシリーズの|第8弾。ドミニク|が裏切り、ホブス|が投獄されるなど|ファミリーは崩壊|の危機に直面す|る。
2230;【無料】チェッ|カーズ 1988 SC|REW TOUR;チェッカーズが19|88年8月26日に東|京ドームで行った|コンサートを放|送。
2330*;🈙🅍グリーンマ|イル【編成部オ|ススメシアタ|ー】;トム・ハンクス主|演の感動の人間ド|ラマ。1930年代ア|メリカ南部の刑務|所を舞台に、不思|議な力を持つ死刑|囚の姿を描く。
2650;🈙🅍激突！;荒野のハイウェイ|で巨大タンクロー|リーにつけ狙われ|る男の恐怖！ステ|ィーヴン・スピル|バーグのTV監督|時代の傑作サスペ|ンス。
2830*;🈙🅍恋するベー|カリー;メリル・ストリ`],
        ['11 BS11イ..', `
500;ごりやくさん 第|49回「霧島神|宮」（鹿児島）;全国各地の「御利
530;ショッピング情|報;テレビショッピン|グ
600;🈢ショップチャ|ンネル 見ればト|クする！お得満|載グルメ大放出|パート2！;グルメ／見ればト
700;🈢ショップチャ|ンネル 首のフィ|ットでリラック|ス！ 西川 ポリ|ゴンピロープレ|ミアム
800;ショッピング情|報
830;ショッピング情|報
900;🈢ショップチャ|ンネル 現場発|信！社員口コミ|ヒットSHOW フ|ァッション編;現場発信！社員口
1000*;黒谷友香、お庭|つくります もう
1030;🈟宝塚カフェブ|レイク #1248;東京宝塚劇場公演|「恋する天動説」
1100;ショッピング情|報
1130;ショッピング情|報;テレビショッピン|グ
1200;🈢🈓BSイレブン|競馬中継 第1部;【中山】5R〜8R|【阪神】5R〜7|R、8R「三木ホー|スランドパークジ|ャンプステーク|ス」、9R「君子|蘭賞」
1430;ショッピング情|報
1500;ショッピング情|報
1530;ショッピング情|報;テレビショッピン
1600;🈢🈓BSイレブン|競馬中継 第2部;【中京】12R「フ|ィリピントロフィ|ー」【阪神】12R|【中山】12R
1730;ショッピング情|報
1800;ショッピング情|報;テレビショッピン
1830*;しまじろうのわ|お！ #717「は|るを さがそ|う！」
1900;BS11ガンダムア|ワー 機動戦士ガ|ンダム THE ORI
1930*;BS11ガンダムア|ワー 機動戦士ガ
2000*;TOKYO FM 少|年合唱団 コンサ|ート 天使のハー|モニーが紡ぐ 卒|団2026
2100*;偉人・敗北から|の教訓「九鬼嘉|隆・関ヶ原で息|子と敵対した海|賊大名の行く|末！
2155;TrainsJapan 「I
2200*;お気楽領主の楽|しい領地防衛〜|生産系魔術で名
2230;うまナビ！イレ|ブン;当日の中央競馬レ|ース結果と、GⅠ
2300;22/7計算外 seas|on2 #52;「絆を深めろ！一|致団結ナナニジチ
2330;Fate/strange Fa|ke 第13話「夢幻
2400*;🈟春夏秋冬代行|者 春の舞 第壱|話「春の舞」;春の代行者・雛菊
2430;TVアニメ「上伊|那ぼたん、酔へ|る姿は百合の|花」放送直前特
2500*;多聞くん今どっ|ち！？🈡SWITC|H.13「わたし、|腹を括りま|す！」
2530;アニナビ☆イレ|ブン！ 前編
2600;🈢ショップチャ|ンネル レザーを|洗う発想！ キレ|イにして潤いも|たっぷりレザー|ウォッ
2700;ショッピング情|報
2730;ショッピング情|報;テレビショッピン
2800;ショッピング情|報;テレビショッピン
2830;ショッピング情|報;テレビショッピン|グ`],
        ['12 BS12ト..', `
500;山本リンダのど|うにも！☆モー|ニング 歌の翼|#39
530;おはよう！ナニ|ワミュージック|♪ #35;関西在住歌手の歌
600;記憶のロケ地を|巡る旅 #18 杉|田かおる／藤田
630;BS12ガイド;3月のおすすめ番|組をご紹介！
700;QVC スリーラン|ドシーフーズ海|からの贈り物;選び抜かれた海の|幸をご家庭で手軽|に！まさに贈り物
800;QVC たかの友梨|エステファクト|幹細胞コスメ;植物幹細胞由来成|分を含む美容成分
900;QVC SIXPAD;これならきっと、|続けられそう！老|若男女を問わず、|ぜひお試しくださ|い。美と健康のサ|ポートを目指す、
1000;QVC スリーラン|ドシーフーズ海|からの贈り物;選び抜かれた海の|幸をご家庭で手軽|に！まさに贈り物|といえる美味を皆
1100;QVC たかの友梨|エステファクト|幹細胞コスメ;植物幹細胞由来成|分を含む美容成分|を配合。輝くよう|な潤いのあるツヤ
1200;QVC 新谷酵素|酵素パワーを実|感！;活きている酵素|（＝エンザイム）
1300;🈟韓国ドラマ そ|の男の記憶法|【キム・ドンウ|クxムン・ガヨ|ン主演】第1話、|第2話;過剰記憶症候群に|よって、1年365|日、8760時間を全|て記憶するキャス|ターと情熱的に気|ままに生きるトッ|プ女優の予測不可
1500;テレビショッピ|ング
1530;テレビショッピ|ング;厳選した商品をご
1600;ありがとう 第2|シリーズ 第48話;水前寺清子主演、|石井ふく子が手が|けた傑作ドラマ|「ありがとう」第|2シリーズ。総合|病院を舞台に人間|模様を描くホーム
1655;新鮮！にっぽん
1700;QVC たかの友梨|エステファクト|幹細胞コスメ;植物幹細胞由来成|分を含む美容成分|を配合。輝くよう
1800;ガマンできない|腰痛！ 腰痛治療|へのアプローチ
1830;鉄道アドベンチ|ャー #5 三重|県・伊賀鉄道|「忍びの里を駆
1900*;土曜洋画劇場|「マッドマック|ス 怒りのデス・|ロード」（字|幕）;アカデミー賞6部|門受賞、シリーズ|4作目となる世紀|末カーアクショ|ン。
2120;土曜しょ〜と劇|場「二世」（字
2145*;久住昌之のニッ|ポン箸休めさん
2200;QVC たかの友梨|エステファクト|幹細胞コスメ;植物幹細胞由来成|分を含む美容成分|を配合。輝くよう|な潤いのあるツヤ|美肌へ導きます。
2300;QVC 輝く大人の|華やかデイリー|「MASAGO」;明るく元気ハツラ|ツなデザインが魅|力。デイリーで着|られる華やかなア
2400;QVC J.ノリツグ|のヘルシー美容|食;ヘルシーなのに、|美味しい！J.ノリ|ツグさんがおすす|めする大人気美容|食の数々にご期待|ください。
2500;QVC TEIJINこ|こちサイエンス|寝具特集;TEIJINが開発した|高機能素材を使用|した寝具。清潔で|快適な睡眠を、オ|ールシーズンお届
2600;韓国ドラマ 餌|【ミッキ】第12|話（字幕）;チャン・グンソク|×ホ・ソンテ初共|演！謎多き事件を|追いかける刑事が
2700;ウェザーニュー|スLiVE;最新の気象情報を|お届けします。
2800;知里と修右のミ|ュージックエッ|センス #24
2830;あなたに届ける|音楽会 #169;音楽トークだけに|とどまらず、様々`],
        ['放送大学テレビ', `
600;🈑問題解決の進|め方 第10回;「組織での進め|方」
645;🈑問題解決の進|め方 第11回;「グループワーク|と創造性」
730;🈑問題解決の進|め方 第12回;「組織による問題|解決手法」
815;🈑遠隔学習のた|めのパソコン活|用 第10回;「図表作成の技
900;🈑遠隔学習のた|めのパソコン活|用 第11回;「表計算の技
945;🈑遠隔学習のた|めのパソコン活|用 第12回;「文書作成の技|法」
1030;🈑地理空間情報|の基礎と活用 第|10回;「災害時における|活用〜阪神淡路大|震災、東日本大震
1115;🈑地理空間情報|の基礎と活用 第|11回;「農業、林業、海|洋分野における活
1200;🈑地理空間情報|の基礎と活用 第|12回;「行動・生態の
1245;ファカルティ・
1300;放送大学附属図|書館利用ガイド
1330;放送大学アーカ|イブス・知の扉|「学力と学習支|援の心理学('14)|第5集」;「学力と学習支援|の心理学('14)第5|集（第13回〜第15|回）」
1545;放送大学アーカ|イブス・知の扉|「Walking with|Writers ('16) 第1|3回〜15回」;「Walking with|Writers−A Liter|ary Journey arou|nd England('16)第|13回・14回・15|回」
1800;数理・データサ|イエンス・AI 専|門講座「ソフト|ウェア開発への
1845;キャンパスガイ|ド「退任教員か|らのメッセージ
1900;授業科目案内
1915;授業科目案内|「社会・集団・
1930;学位記授与式「2|025年度放送大学|学位記授与式」
2045;授業科目案内|「ジオストーリ|ー('25) 映画芸術
2100;🈑BSキャンパス|ex特集「世界の|アニメーション|史と技術」
2145;🈑特別講義「レ|ゲット教授が見|た日本〜ノーベ|ル賞科学者によ|る異文化交
2230;公開講座セレク|ション「「無意|識」の世界の不|思議」
2315;放送大学クラシ|ックス「外国語|への招待 トルコ|語 ('97)」
2400;`],
        ['放送大学テレビ', `
600;🈑感覚と応答の|生物学 第10回;「聴覚応答とその|可塑性」
645;🈑感覚と応答の|生物学 第11回;「社会性とコミュ|ニケーション」
730;🈑感覚と応答の|生物学 第12回;「植物の環境応|答」
815;🈑学校リスク論|第10回;「貧困問題から考|える問題行動への
900;🈑学校リスク論|第11回;「学校リスクと法|律、判例」
945;🈑学校リスク論|第12回;「児童生徒のリス|クの法的分析」
1030;🈑雇用社会と法|第10回;「労働契約の終|了」
1115;🈑雇用社会と法|第11回;「非正規雇用と待|遇格差の是正」
1200;🈑雇用社会と法|第12回;「就業形態の多様|化と労働市場」
1245;`],
        ['グリーンチャンネル', `
430;参考レース＆重|賞調教VTR（土|曜開催分） #897;「高松宮記念、日|経賞、毎日杯|他」
630;トレセンまるご|と情報局 #556;東西トレセンから|の取れたて情報を|お届け！
730;🈞トラックマン|TV #743;「高松宮記念、日|経賞、毎日杯、マ|レーシアC他 展|望」
900;🈚🈢中央競馬全|レース中継🈓;中央競馬全レース|生中継！JRAで行|われる全レースを|中心にお届けしま|す。
1300;🈢中央競馬全レ|ース中継🈓;中央競馬全レース|生中継！JRAで行|われる全レースを|中心にお届けしま|す。
1700;🈢VANで勝ち馬|さがしてみませ|んか #397
1730;アタック！地方|競馬 #365
1800;今日のレースリ|プレイ;「第3回中山競馬|第1日・第2回阪神|競馬第1日・第2回|中京競馬第5日」
1930;🈢日曜レース展|望KEIBAコンシ|ェルジュ #997;コンシェルジュが|おすすめのレー|ス・買い目をご提|案！高松宮記念！
2100;参考レース＆重|賞調教VTR（日|曜開催分） #897;「高松宮記念、マ|ーチS 他」
2300;🈞VANで勝ち馬|さがしてみませ|んか #397;JRA-VANを活用
2330;🈚🈢ALL IN LIN|E〜世界の競|馬〜（2026ドバ|イワールドカッ|プデー中継） #1|20;2026ドバイワール|ドカップデー中継
2630;アタック！地方|競馬 #365;「地方競馬情報が
2700;🈞VANで勝ち馬|さがしてみませ
2730;🈞日曜レース展|望KEIBAコンシ|ェルジュ #997;コンシェルジュが|おすすめのレー|ス・買い目をご提|案！高松宮記念！`],
        ['BSアニマックス', `
430;🈑よふかしのう|た #11,12;第11夜「吸血鬼っ|て知ってるか|い？」 第12夜|「今日ウチ親いな
530;情報;この時間は情報番|組をお送りしてお|ります。
600;🈑ぼのぼの 傑作|選;#114「ぼのか
630;🈑真・侍伝 YAI|BA #8;#8「東洋少の戦
700;天久鷹央の推理|カルテ #9,10;Karte9「天使の舞|い降りる夜 後|編」 Karte10「密|室で溺れる男 前
800;🈑ウィッチウォ|ッチ #23,24;#23「はじめての|おふかい／オシエ|シニッシ 執筆怒|涛編」
900;🈑ルパン三世(P|ART2) ベストセ|レクション;#144「不二子危機|一髪救出作戦」 #|145「死の翼アル|バトロス」 ルパ
1000;🈑名探偵コナン|#990
1030;情報;この時間は情報番|組をお送りしてお|ります。
1100*;🈙劇場版「ペル|ソナ3」 #1 Spri|ng of Birth;1日と1日の狭間に|ある隠された時間|「影時間」。街は|動きを止め、人々|はオブジェへと姿|を変える。そこに|はびこる異形の…
1250*;🈙劇場版「ペル|ソナ3」 #2;『Midsummer Kn|ight's Dream』 主|人公・結城 理|は、「ペルソナ」|の力に覚醒し、特|別課外活動部へと|引き入れられる。|最…
1440*;🈙劇場版「ペル|ソナ3」 #3 Falli|ng Down;季節は秋へ。異形|の怪物「シャド|ウ」と、主人公・|結城理をはじめと|した特別課外活動|部の戦いにも終わ
1620*;🈙劇場版「ペル|ソナ3」 #4 Wint|er of Rebirth;死を知り、死を見|つめ、死と向き合|う。さまざまな出|会いと別れを繰り|返し、その度に、|成長を遂げてきた|結城理と仲間た…
1825;ばなにゃ ふしぎ
1830;🈑こちら葛飾区|亀有公園前派出|所 傑作選;#150「肉体派マジ
1900;🈑ヴィジランテ|#19;『ヴィジランテ -
1930;🈑名探偵コナン|カーテンの向こ
2000;葬送のフリーレ|ン #36
2030;🈑『呪術廻戦』|「死滅回游 前|編」 #54;#54「仙台結界」
2100*;🈙劇場版 魔法科|高校の劣等生 星|を呼ぶ少女;季節は過ぎ、もう|すぐ二度目の春|―。劣等生の兄|と、優等生の妹。|ふたりの魔法科高|校での生活は、そ|の一学年目を終え|よ…
2245;ばなにゃ ふしぎ|ななかまたち;#11「ばなにゃと
2300;東武鉄道 presen|ts 南條愛乃のゆ|るり旅！ #2 EN|D
2330;ウタヒメドリー|ム AUDITION #
2400;🈑ルパン三世(P|ART2) ベストセ|レクション;#144〜155 END|ルパン一味が日本|から脱出して5|年。世界に散って|いたルパン・次|元・五右ェ門・不|二子のルパンファ|ミリ…`],
        ['J SPORTS 1', `
300;アルペンスキー|FIS W杯25/26|【男女スーパー|G】リレハンメ|ル(3/22);10月に開幕し翌年|3月までの約6か月|間、世界を転戦す|るFISワールドカ|ップ。 “雪上のF|1”と呼ばれ、広|大な大自然で繰り|広げられる戦いに|注目！
600;ドキュメンタリ|ーThe REAL ア|ルバルク東京 〜|キャプテン・ザ|ック選手の秘|密〜
700;[無料]ぶらり高|校サッカー【ワ
730;プロ野球2026 広|島×中日(3/27);広島東洋カープ×|中日ドラゴンズ|解説：黒田博樹、|田中広輔 実況：|小野宏樹
1100;[無料]4月番組情
1105;[生]メジャーリ|ーグ中継2026 ド|ジャース×ダイ|ヤモンドバック|ス(3/27);ロサンゼルス・ド|ジャース（大谷翔|平／山本由伸／|佐々木朗希 所|属）×アリゾナ・|ダイヤモンドバッ|クス
1355;[生]プロ野球202|6 広島×中日(3/|28);広島東洋カープ×|中日ドラゴンズ|解説：山本浩二、|野村謙二郎 実|況：澤村優輝
1800;ドキュメンタリ|ーThe REAL ア|ルバルク東京 〜|キャプテン・ザ|ック選手の秘|密〜;【アルバルク東京
1900;[初]ジャパンラ|グビー リーグワ|ン2025-26 D1 第|13節 横浜E×ト|ヨタV;国内最高峰のラグ|ビーリーグ！世界|トップクラスのプ|レーに注目！ 横|浜キヤノンイーグ|ルス×トヨタヴェ|ルブリッツ
2130;[初]バレーSVリ|ーグ25-26 男子|第19節 WD名古|屋×大阪B(3/28);水町泰杜、宮浦健|人らの迫力あるプ|レーで観客を魅了|するWD名古屋|と、アタック決定|率が高く、安定し|て上位を維持する|大阪Bの対決！CS|まで残り1ヶ月の|重要な一戦！
2430;[初]ジャパンラ|グビー リーグワ|ン2025-26 D2 第|9節 GR東葛×江|東BS;国内最高峰のラグ|ビーリーグ！世界|トップクラスのプ|レーに注目！ グ|リーンロケッツ東|葛×清水建設江東|ブルーシャークス
2700;ドキュメンタリ|ーThe REAL 東|京グレートベア|ーズ 柳田将洋／|後藤陸翔;東京GBの快進撃
2800;バレー大同生命|SVリーグ25-26|男子第19節 WD|名古屋×大阪B|(3/28);水町泰杜、宮浦健|人らの迫力あるプ|レーで観客を魅了`],
        ['J SPORTS 2', `
425;アルペンスキー|FIS W杯25/26|【男女滑降】リ|レハンメル(3/2|1);10月に開幕し翌年|3月までの約6か月|間、世界を転戦す|るFISワールドカ|ップ。 “雪上のF|1”と呼ばれ、広|大な大自然で繰り|広げられる戦いに|注目！
725;スノーボード FI|S W杯25/26【男|女PSL】ヴィン|ターベルク(3/2|1);旗門が設置された|コースを2人の選|手が同時に滑り降|り、速さを競う。|注目は、総合優勝|が懸かる三木つば|き。頂点を目指す|滑りに注目！
955;[無料]ぶらり高|校サッカー【ワ|ッキー＆カレン
1025;インフォメーシ|ョン
1055;MLBイッキ見！|#1;知っているとML|B中継が2倍楽しく|なる情報をお届|け！ (#1 2026年3
1140;インフォメーシ|ョン
1155;[生]ジャパンラ|グビー リーグワ|ン2025-26 D1 第|13節 S東京ベイ|×BL東京;国内最高峰のラグ|ビーリーグ！世界|トップクラスのプ|レーに注目！ ク|ボタスピアーズ船|橋・東京ベイ×東|芝ブレイブルーパ|ス東京
1420;[生]ジャパンラ|グビー リーグワ|ン2025-26 D1 第|13節 東京SG×|埼玉WK;国内最高峰のラグ|ビーリーグ！世界|トップクラスのプ|レーに注目！ 東|京サンゴリアス×|埼玉ワイルドナイ|ツ
1700;杏ちゃん＆しん|やのラグビーは|じまるよ！2026
1730;[無料]スーパー
1745;メジャーリーグ|中継2026 ドジャ|ース×ダイヤモ|ンドバックス(3/|27);ロサンゼルス・ド|ジャース（大谷翔|平／山本由伸／|佐々木朗希 所|属）×アリゾナ・|ダイヤモンドバッ|クス
2045;[無料]まるっと|バレーボール ミ|ニ 平山詩嫣×荒
2100;[無料]高円宮杯|JFA U-18 サッ|カープレミアリ|ーグ2026 ナビ;今シーズンの見ど
2145;[生]スノーボー|ド FIS W杯25/2|6【男女HP】シ|ルヴァプラーナ|(3/28);今シーズン最終|戦！世界トップレ|ベルの実力をもつ|日本勢が魅せるト|リックに注目！|ゲスト：山田琉聖|(ハーフパイプ SN|OW JAPAN)
2500;ジャパンラグビ|ー リーグワン20|25-26 D2 第9節|S愛知×日野RD;国内最高峰のラグ|ビーリーグ！世界|トップクラスのプ|レーに注目！ 豊|田自動織機シャト|ルズ愛知×日野レ|ッドドルフィンズ
2730;アルペンスキー|FIS W杯25/26|【男女スーパー|G】リレハンメ|ル(3/22);10月に開幕し翌年|3月までの約6か月|間、世界を転戦す|るFISワールドカ|ップ。 “雪上のF|1”と呼ばれ、広|大な大自然で繰り`],
        ['J SPORTS 3', `
500;ツアー・オブ・|オマーン2026 ハ|イライト Cycle*;中東オマーンで開|催されたUCI Pro|シリーズのステー|ジレース、ツア|ー・オブ・オマー|ンをハイライトで
600;[無料]高円宮杯|JFA U-18 サッ|カープレミアリ|ーグ2026 ナビ
645;[無料]SUPER G
700;[無料]スーパー
715;[無料]まるっと|バレーボール 〜|大同生命SVリー|グ情報番組〜#2
800;[生]メジャーリ|ーグ中継2026 ブ|ルージェイズ×|アスレチックス|(3/27);【岡本和真MLB|デビュー戦】 ト|ロント・ブルージ|ェイズ（岡本和真|所属）×アスレチ|ックス
1200;ドキュメンタリ|ーThe REAL ア|ルバルク東京 〜|キャプテン・ザ|ック選手の秘
1300;ワールド・オ|ブ・フリースポ
1330;[生]プロ野球202|6 オリックス×|楽天(3/28);【J SPORTSでは|オリックス・バフ|ァローズ主催試合|を全試合生中|継！】
1800;[無料]スーパー
1815;MLBの歩き方
1830;杏ちゃん＆しん|やのラグビーは|じまるよ！2026|#2
1900;[無料][初]SUPE
1915;[無料][初]SUPE|R GT 2026チー
1930;[初]ジャパンラ|グビー リーグワ|ン2025-26D2第9|節S愛知×日野R|D;国内最高峰のラグ|ビーリーグ！
2200;メジャーリーグ|中継2026 ブルー|ジェイズ×アス|レチックス(3/2|7);【岡本和真MLB|デビュー戦】 ト|ロント・ブルージ|ェイズ（岡本和真|所属）×アスレチ|ックス
2500;プロバスケ Bリ|ーグ 2025-26 第2|7節-1 名古屋D×|群馬(3/28);10年目の節目を迎|える2025-26のBリ|ーグ。 チーム、|観客が一体となっ|て生み出される|「ココロ、たぎ|る。」瞬間に注|目！
2730;ドキュメンタリ|ーThe REAL ア|ルバルク東京 〜|キャプテン・ザ|ック選手の秘|密〜;【アルバルク東京
2830;[解]J SPORTS|HOOP!2026 学生|バスケ情報番組|#2`],
        ['J SPORTS 4', `
500;ドキュメンタリ|ーThe REAL ア|ルバルク東京 〜|キャプテン・ザ|ック選手の秘|密〜;【アルバルク東京|4000kmを行く】|キャプテン・ザ
600;【45分】ラグビ|ーリーグワン202|5-26 D1 第12節|BL東京×三重
645;【45分】ラグビ|ーリーグワン202|5-26 D1 第12節|トヨタ×静岡
730;【45分】ラグビ|ーリーグワン202|5-26 D1 第12節|埼玉×BR東京
815;[無料]ぶらり高|校サッカー【ワ|ッキー＆カレン
850;ボルタ・ア・カ|タルーニャ2026|第5ステージ Cyc|le*;ブエルタ・ア・エ|スパーニャより古|い伝統あるステー|ジレース。
1120;杏ちゃん＆しん|やのラグビーは
1150;[生]ジャパンラ|グビー リーグワ|ン2025-26 D2 第|9節 花園L×釜石|SW;国内最高峰のラグ|ビーリーグ！世界|トップクラスのプ|レーに注目！ 花|園近鉄ライナーズ|×釜石シーウェイ|ブス
1420;[生]ジャパンラ|グビー リーグワ|ン2025-26 D1 第|13節 静岡BR×|神戸S;国内最高峰のラグ|ビーリーグ！世界|トップクラスのプ|レーに注目！ 静|岡ブルーレヴズ×|コベルコ神戸ステ|ィーラーズ
1700;メジャーリーグ|中継2026 ブルー|ジェイズ×アス|レチックス(3/2|7);【岡本和真MLB|デビュー戦】 ト|ロント・ブルージ|ェイズ（岡本和真|所属）×アスレチ|ックス
2000;[初]プロバスケ|Bリーグ 2025-26|第27節-1 名古屋|D×群馬(3/28);10年目の節目を迎|える2025-26のBリ|ーグ。 チーム、|観客が一体となっ|て生み出される|「ココロ、たぎ|る。」瞬間に注|目！
2230;ダーツ PDCクラ|シック #23【201|3 ワールドチャ
2255;[生]ボルタ・|ア・カタルーニ|ャ2026 第6ステ|ージ Cycle*;別名「カタルーニ|ャ一周」 1911年|から開催されてお|り、その歴史はブ|エルタ・ア・エス|パーニャより古い|伝統あるステージ|レース。 リモー|ト解説：辻啓 実|況：...
2600;[無料]ぶらり高|校サッカー【ワ|ッキー＆カレン|ロバート 日韓
2630;FIMスーパーバ|イク世界選手権2|026 第1戦 オー|ストラリア;市販車バイクをベ|ースにした最高峰|レース。ヨーロッ|パを中心に世界を|転戦しながら、年|間チャンピオンの|座を争う。`],
        ['BS釣りビジョン', `
500;とことんエギパ|ラダイス 165 大|分県佐伯の旅;今回は大分県佐伯|市を舞台に、おね|ぃさん初の冬のオ|カッパリエギング|に挑戦！アジング|界のレジェンド・
600;ソルトギャラリ|ー 50 東京湾ボ|ートチニング;旬のソルトルアー|ゲームをお送りす|る『ソルトギャラ
700;AREA WARS -|Advance- 4 吉田|遊＆にっしゃんi|nリヴァスポッ|ト早戸
800;🈞テッペンDAS|H！ 33 春の愛媛|県新宮ダム;釣果はもちろん、|数あるバス釣り番
900;GAN’s GANGS|スピンオフ
930;ブレイクタイム;季節に合わせた|様々な内容をお届|けします。
1000;マイスターズ 三|つ星フィッシン|グ 2 春のヒラマ|サ;様々なジャンルの|釣りのインフルエ|ンサー・アングラ
1100;トラウトギャラ|リー 早春のエリ|アトラウトのス|スメ;四季折々の表情を|見せる山岳渓流や|身近な管理釣り場
1200;ブレイクタイム;季節に合わせた|様々な内容をお届
1230;関西発めちゃめ|ちゃ釣りたい！
1300;海釣り幕営 12|鹿児島のマゴチ;釣りと共に野営す|ることをモットー|とするソルトルア|ーマン・「釣れな|いおじさん」こと|上宮則幸が、釣
1400;メタルバスター|41 北海道 道南|の海サクラ;沿岸部を回遊する
1500;ブレイクタイム;季節に合わせた
1530;美らつり沖縄 5|ウキフカセ;琉球・沖縄の釣り
1600;Fish Fury 8 長崎|県福江島ヒラマ|サゲーム;血湧き肉躍る瞬間|を求めて旅する|『Fish Fury』。|今回の舞台は長崎|県五島列島福江|島。ロックショア|ゲームのスペシャ|リスト・瀬川良太
1700;アジングへ行こ|う！ 54 和歌|山・中紀をラン|ガン！;今回の『アジング|へ行こう！』は
1800;Oh！エド釣り日|記 時化はつらい|よOh！エド玉手|箱;身近な堤防や海釣|り施設から沖磯ま|で、ロケの日程で|必ず答える釣果
1900;ソルトギャラリ|ー 44 長崎県島|原ショアキャス|ティング;旬のソルトルアー|ゲームをお送りす
2000;🈟アナタに釣っ|ていただきま|す！ 36 マグナ|ム高田;お馴染みの釣り名|人が、ジャンルや|釣り方に捉われ
2100;🈟TROUT QUES|T 33 愛知県寒狭|川のアマゴ;四季折々の表情を|見せるフィールド|で、吉田和展がト|ラウトルアーゲー|ムを楽しむ『TRO
2200;🈟トラウトギャ|ラリー 2026 解|禁の道志川;四季折々の表情を|見せる山岳渓流や|身近な管理釣り場|で、イワナ、ヤマ|メ、ニジマスなど
2300;【春めく季節の|ヒラマサゲーム|特集】SALT Dr|eamer 83 玄界灘;プロアングラー鈴|木斉が世界を舞台|に夢のビッグワン
2400;藤田京弥 ROAD|TO THE TOP 1|前編;日本のバス釣り界|のエース・藤田京|弥が、世界最高峰|の権威を誇るバス|トーナメント“バ|スマスタークラシ|ック”に参戦！そ|の挑戦に、釣りビ
2500;藤田京弥 ROAD|TO THE TOP 2|後編;日本のバス釣り界|のエース・藤田京|弥が、世界最高峰|の権威を誇るバス|トーナメント“バ
2600;特捜AJIENT 12|愛媛県愛南町を|大調査！;ルアーメーカーの|工場長、長澤耀。|彼には『特捜AJI|ENT（エージェン
2700;follow my F 29|愛媛県 野村ダム;陸っぱりバスフィ|ッシングのレジェ|ンド・川村光大郎|が“地元超え”を
2800;Splash！アラソ|ルト 8 楽々 簡単|バラエティー 鹿|島灘でSLJ;水しぶきがはじけ|とぶような爽やか|テイストでソルト|ルアーゲームをお`],
        ['WOWOWプラス', `
420*;🈙エンド・オ|ブ・デイズ;アーノルド・シュ|ワルツェネッガー|の体当たりアクシ|ョンが炸裂。元刑|事と悪魔の死闘を|描くアクション・|ホラー。監督は|『カプリコン・|1』のピーター・|ハイアムズ。
630;🈚地球散歩 ポル
645;🈙刑事グラハム|／凍りついた欲|望;精神科医で猟奇殺|人犯の“ハンニバ|ル・レクター”が|初めてスクリーン|に登場。犯人の意|識にシンクロしな|がら事件を解決し|ていく元FBIの捜|査官が、異常犯の|心理に迫る。
855*;🈙羊たちの沈黙;アカデミー賞5部|門を制したサイ|コ・スリラーの大|傑作。FBI訓練生|クラリスが、天才|殺人鬼レクター博|士の協力を得て謎|の猟奇殺人犯を追|う。ジョディ・フ|ォスター主演。
1105*;🈙野性の証明 ◆|高倉健、薬師丸|ひろ子 出演;高倉健と薬師丸ひ|ろ子(本作でデビ|ュー)が共演し|た、角川映画のサ|スペンスアクショ|ン大作。虐殺から|少女を救った元自|衛隊員は、陰謀に|巻き込まれてい|く。原作は森村誠|一
1340*;🈙武士の家計簿|◆堺雅人、仲間|由紀恵 出演;堺雅人、仲間由紀|恵らが豪華共演し|た、森田芳光監督|によるユニークな|時代劇。幕末維新|の動乱期を家業の|そろばんを武器に|生き抜く、ある下|級武士のつましい|生きざまを描く。
1600;🈙駆込み女と駆|出し男 【原田眞|人監督作一挙】;大泉洋ら人気俳優|陣が豪華に共演し|た人情時代劇。江|戸時代の後期、離|婚を望む女性たち|が駆け込む縁切り|寺・東慶寺には、|彼女たちをめぐる|悲喜こもごもの物|語があった……。
1830*;🈙日本のいちば|ん長い日（201|5）【原田眞人|監督作一挙】;役所広司、本木雅|弘らが共演し、原|田眞人監督が半藤|一利のノンフィク|ション小説を再映|画化。1945年の終|戦前夜。日本の前|途を巡って、ぎり|ぎりの攻防が繰り|広げられる。
2100*;🈙関ヶ原 【原田|眞人監督作一|挙】;岡田准一が義を重|んじる戦国武将・|石田三成を演じ|た、司馬遼太郎原|作の時代劇。“関|ヶ原の戦い”で西|軍と東軍が運命を|懸けて激戦を展|開。有村架純、役|所広司らが豪華共|演
2335;🈙ラブ・クライ|ム／官能の罠;ショーン・ヤング|主演のエロティッ|ク・サスペンス。|おとり捜査をして|いるうちにレイプ|強盗犯に拉致さ|れ、誘惑されてい|く女性検事を官能|的に描く。監督は|リジー・ボーデ|ン。
2515;🈙解放区 嵌まる|女;殺した女性の裸体|をさらす凄惨な連|続殺人事件に女性|刑事キャサリンが|挑むエロティック|サスペンス。
2720*;🈙ドン・ジョン|ポルノ依存症の|男;『（500）日のサ|マー』のジョゼ|フ・ゴードン＝レ|ヴィットが主演・|脚本を兼任した初|監督作。ポルノ鑑|賞がやめられない|プレイボーイが本|当の恋を学ぶ姿を`],
        ['日本映画専門ch', `
420;世にも奇妙な物|語 傑作選 #1 「8|分間」/「鏡子|さん」
520;🈙兵隊やくざ殴|り込み;出演：勝新太郎／|田村高廣／細川俊|之 監督：田中徳|三 戦場に生きる|男たちの奇妙な友|情と生き様を描い|た痛快アクション|シリーズ第7作|目。（1967年 89|分）
700;🈙兵隊やくざ★|強奪;出演：勝新太郎／|田村高廣／佐藤友|美 監督：田中徳|三 戦場に生きる|男たちの奇妙な友|情と生き様を描い|た痛快アクション
830;特命刑事カクホ|の女（全7話） #|1-4 【週末イッ|キミドラマ】;出演：名取裕子／|麻生祐未／伊東四|朗／高橋克典／吉|沢悠／鶴見辰吾|※放送時間の詳細|は日本映画専門チ|ャンネルHPへ|「日本映画」で検|索！
1200;世紀末の詩（全1|1話）#1-5 【週|末“イッキ|ミ”ドラマ 野島|伸司ドラマ特|集】;※#1放送の前に野|島伸司さんからの|メッセージあり|出演：竹野内豊／|山﨑努／坂井真紀|／木村佳乃 ※放|送時間の詳細は日|本映画専門チャン|ネルHPへ 「日本|映画」...
1645;世紀末の詩（全1|1話）#6-11🈡|【野島伸司ドラ|マ特集】;出演：竹野内豊／|山﨑努／坂井真紀|／木村佳乃／吉川|ひなの／松本恵|※放送時間の詳細|は日本映画専門チ|ャンネルHPへ|「日本映画」で検|索！
2240*;🈙ダイナマイト|どんどん 【没後|5年・田中邦衛〜|名優の記憶をた|どる旅〜】;出演：菅原文太／|北大路欣也／宮下|順子 監督：岡本|喜八 地元ヤクザ|の抗争を民主的に|解決しようと野球|大会が開かれる|が…。（1978年 1|43分）
2520;【無料】第50回|エランドール賞|授賞式;第50回エランドー|ル賞 授賞式の模|様をお届け！
2620;神父・草場一平|の推理（主演・|水谷豊）;出演：水谷豊／淡|路恵子／中山忍|水谷豊が少年院に|いた過去を持つ教|会の神父を演じる|ヒューマンサスペ|ンス（2004年 93|分）
2800;男おばさん!! #3|91🈡;「男おばさんが
2820;世にも奇妙な物|語 傑作選 #2|「あなたの物|語」/「部長O|L」`],
        ['ディズニーch', `
400;ヒカルの碁#61-6|4;#61「第六十一局|佐為が消えた?」|ほか。祖父の蔵で|古い碁盤を見つけ|たことで、平安時|代の美丈夫、藤原|佐為と出会った進|藤ヒカル。突如、|佐為の魂がヒカル|に宿り…。
600;ミッキーマウス|クラブハウス#1|11🈔
630;プーさんといっ|しょ#40🈔;#40「イーヨーの
700;ちいさなプリン|セス ソフィア#1
730;パップストラク|ション#40🈔;#40「カメさんが
800;ブルーイ#46🈔;#46「カメさん /
830;チビバース スト|ーリー#11-#13
900;チップとデール|のパークライフ
930;スーパーキティ|#19🈔★春休み|特別放送;#19「Sファータ
1000;アリスとふしぎ|のくにのベーカ
1030;フィニアスとフ|ァーブ#149🈔★|春休み特別放送;#149「悪夢を映画
1100;StuGo 怪奇サマ|ーキャンプ#7-8|🈔★春休み特別|放送;#7「ケルブ族の辰
1155;ツムツム#1🈞
1200*;映画：シュガ|ー・ラッシュ：|オンライン🈔★|春休み特別放送;好奇心旺盛な天才|レーサーのヴァネ|ロペと、ゲームの|悪役だけど心優し|いラルフ。大親友|のふたりが、アー|ケードゲームの世|界を飛び出し、イ|ンターネットの世
1400*;映画：魔法使い|の弟子🈔★春休|み特別放送;今は亡き偉大なる|魔法使いマーリン|の弟子バルサザー|ル（ニコラス・ケ|イジ）は、現代の|ニューヨークで遂|にマーリンの後継
1600;ミッキーマウス|とロードレーサ|ーズ#8🈔★春休
1630;ミッキーマウス|クラブハウス プ|ラス#13🈔★春|休み特別放送;#13「きえたアイ|スクリームのな
1700;ビッグシティ・|グリーン#91🈔|★春休み特別放
1730;フィニアスとフ|ァーブ#140🈔★
1800;チップとデール|のパークライフ|#4★春休み特別
1830;フィニアスとフ|ァーブ#151🈔;#151「スパイスー
1855;[新]潜入せよ！
1900;ミラキュラス レ|ディバグ＆シャ|ノワール#132🈔
1930;ミラキュラス レ|ディバグ＆シャ
2000*;ダイナソー🈔;実写の背景とCG|の恐竜たちが共鳴|しあい、観る者を|太古の地球にタイ|ムスリップさせる|奇跡の映像エンタ|ーテイメント！
2130;トイ・ストーリ|ー 謎の恐竜ワー|ルド🈔;メイソンの家に遊
2200*;ロミオ&ジュリ|エット🈔;ウィリアム・シェ|イクスピアの古典|のラブストーリー|を、バズ・ラーマ|ン監督が型破りに|アレンジした魅力|的な名作。／出|演：レオナルド・|ディカプリオ、ク|レア・デーンズ他
2405;オッドタクシー|#5-8;個人タクシーの運|転手・小戸川は今|日も色々な客を乗|せる。#5「アイド|ルなんて呼ばない|で」、#6「なんで|やねんが聞きたい|よ」、#7「トリッ|ク・オア・トリー|ト」ほか
2600;装甲騎兵ボトム|ズ 幻影篇#6[終];#6「インファンテ
2630;装甲騎兵ボトム|ズ 孤影再び;「赫奕たる異端」|と「幻影篇」との|空白期間を描く新|世代ボトムズ第二
2730;モンテ・クリス|ト伯🈔;結婚式の直前、何|者かの陰謀で牢獄|に幽閉されたエド|モン。獄中で出会|った司祭のおかげ|で脱獄に成功した|彼は、モンテ・ク|リスト伯として社|交界に華々しくデ|ビューする。`],
        ['J:COM BS', `
400;市川由紀乃コン|サート ただい|ま！;市川由紀乃の復帰|後初となる単独コ|ンサートをBS初|放送！
600;テレビショッピ|ング;おうちでショッピ
630;マナミ＆光里の|GOLF LOVERS|#51
700;VS今平周吾 #2|4
730;テレビショッピ|ング
800;リマーカブル・|リビング 「高級
830;テレビショッピ|ング
900;リマーカブル・|リビング 「多世
930;中国◇長風渡〜|あなたと綴る、|運命の縁〜 #38|（字幕版）;想い人との縁談が|決まった柳玉茹。|しかし、賢う夢聞
1030;テレビショッピ|ング;おうちでショッピ|ング！毎日選りす
1100;中国◇長風渡〜|あなたと綴る、|運命の縁〜 #39|（字幕版）;想い人との縁談が|決まった柳玉茹。
1200;テレビショッピ|ング;おうちでショッピ
1230;中国◇長風渡〜|あなたと綴る、|運命の縁〜 #40|（字幕版）🈡;想い人との縁談が
1330;テレビショッピ|ング;おうちでショッピ|ング！毎日選りす|ぐりの商品をご紹
1400;中国◇覆流年 復|讐の王妃と絶え|ざる愛 #1（字|幕版）
1500;テレビショッピ|ング
1530;中国◇覆流年 復|讐の王妃と絶え|ざる愛 #2（字|幕版）;宮廷を舞台に繰り|広げられる、時を
1630;テレビショッピ|ング;おうちでショッピ|ング！毎日選りす|ぐりの商品をご紹|介します。
1700;リマーカブル・|リビング 「異文|化を融合させた
1730;リマーカブル・|リビング 「元大
1800;テレビショッピ|ング;おうちでショッピ
1830;三食ごはん #10;韓国の人気俳優|イ・ソジンと2PM|のテギョンが自給|自足の田舎ライフ|を送るシリーズ第|1弾！
2000;5年前の一歩が未|来を変えた〜夫
2030;テレビショッピ|ング;おうちでショッピ|ング！毎日選りす
2100;リマーカブル・|リビング 「ドー|ム型空間が地下
2130;あらいぐまラス|カル #29 星空|をとぼう🈑;動物好きの少年ス
2200;あらいぐまラス|カル #30 ケチ|ケチするな🈑
2230;あらいぐまラス|カル #31 花火|のあがる日🈑;動物好きの少年ス
2300;あらいぐまラス|カル #32 わた|り鳥の帰るころ|🈑
2330;あらいぐまラス|カル #33 ドニ
2400;桜吹雪美人スリ|三姉妹がいく ヌ|ードギャルの入|墨をスリとれ！|みちのく温泉秘|宝さがし;スリ一家の美人三|姉妹が事件解決へ|と導いていく大人|気シリーズ！
2600;花吹雪美人スリ|三姉妹①;京都〜伊東〜伊良|湖〜琵琶湖に秘め|られた名曲の|謎！？はんなり魅|せます・超ウルト|ラ指技！
2800;新TV見仏記 〜|福井・小浜編〜;みうらじゅん・い|とうせいこうが、|仏像に対する深い|愛情と知識に裏打|ちされた絶妙なト|ークで、各地の仏|像を見て歩く旅番`],
        ['ＢＳよしもと', `
500;テレビショッピ|ング;【テレビショッピ|ング】をお送りし
530;🈑おはよう歌謡|曲 #94;この時間は厳選し|た歌謡曲をライン
600;お買い物情報;この時間は暮らし|に役立つお買い物
630;🈢ウェザーニュ|ースLiVE;ライブカメラの映
700;🈑西川きよしの
715;🈑桂文枝の全国
730;テレビショッピ|ング;【テレビショッピ
800;🈑地域発！ど・|ろーかるNEWS
830;🈡ワクワク！や
845;オリオンツアー
900;タカトシ＆ライ|オンの！新ゴル|フやろうぜ！ #2|2;タカトシ＆大西ラ|イオンが芸人仲間|を連れてゴルフ対
1000;お買い物情報;この時間は暮らし
1030;🈡🈑若手創作落|語の会〜よしも|と若手噺家によ|る創作落語バト
1100;🈑花王名人劇場|爆笑四天王;「花王名人劇場」|は昭和の漫才ブー|ムの火付け役にも|なった伝説的な番|組！ 出演者：オ
1200;お買い物情報;この時間は暮らし|に役立つお買い物
1230;🈑let me Know|K-POP！ シーズ|ン1 #4 Rocket P|unch
1330;お買い物情報;この時間は暮らし|に役立つお買い物|情報をお届けしま|す
1400;🈑🈡花月爆笑劇|場 男の花道;1974年から1989ま|で放送されていた
1500;🈢ショップチャ|ンネル(3/28) un|o uno due スタ|イリスト石田純|子の着こなし術
1600;🈑西川きよしの
1615;🈑桂文枝の全国|の首長さんに逢
1630;🈑地域発！ど・|ろーかるNEWS|(3月第4週);地域密着のCATV|局ならではの視点|で取材した、|「Yっ、ローかる」
1700;🈑ビスケットブ|ラザーズの行け|ばわかるさ！〜
1730;お買い物情報;この時間は暮らし
1800;🈑どこでもミル|クボーイ #29;ミルクボーイが
1830*;🈑しゅんしゅん|クリニックPの|医学のイ #6
1900;お買い物情報;この時間は暮らし|に役立つお買い物
1930;🈑かまいたちの|掟 #204
2000;🈑たけだバーベ|キューとキャン
2030;🈑田村淳の夢を|叶えるキャンピ|ングカー #22;キャンピングカー
2100;🈑向井長田のく|るま温泉ちゃん|ねる #70
2130;🈡🈑ガッツ100%|テレビ〜笑いと|愛が企業を救|う〜 #204
2200;🈑東西南北よし|もと麻雀リーグ|season6 #12;吉本の麻雀大好き|芸人たちが『東西|南北』4つのエリ|アに分かれチーム
2255;🈡🈑ガングリオ
2300;テレビショッピ|ング;【テレビショッピ|ング】をお送りし
2330*;🈑つまみは紅し|ょうが 男子〜！
2400;🈡🈑ジモトに乾|杯！居酒屋 礼二|#38;地域を愛する人た|ちが夜な夜な集ま
2430;テレビショッピ|ング;【テレビショッピ|ング】をお送りし
2500*;🈑水田信二の注|文の多い料理教|室 #3
2530*;🈑水田信二の注|文の多い料理教
2600;🈡Blah!Blah!Bla|h!「チュート徳|井の恋する女の|イドバシ」#36
2630;テレビショッピ|ング;【テレビショッピ
2700;🈑鬼奴＆RGの歌|謡スナック想ひ
2730;テレビショッピ|ング;【テレビショッピ
2800;🈑鬼奴＆RGの歌|謡スナック想ひ|出 #8
2830;🈡🈑若手創作落|語の会〜よしも|と若手噺家によ|る創作落語バト`]
    ];

    let hours = '';
    for (let h = 3; h <= 28; h++) {
        hours += `<div class="${hourColors[h]} pt-[2px] leading-[22px]" style="height:${T[(h + 1) * 100] - T[h * 100]}px">${h > 24 ? h - 24 : h}</div>`;
    }
    document.getElementById('hours').innerHTML = hours;

    let heads = '';
    let columns = '';
    data.forEach(([name, text], i) => {
        heads += `<div class="w-[139px] pl-[9px] leading-[33px] whitespace-pre overflow-hidden ${channelColors[i % 7]}">${name}</div>`;
        const rows = text.trim().split('\n').map(line => line.split(';'));
        let cells = `<div style="height:${T[parseInt(rows[0][0])] - 195}px"></div>`;
        rows.forEach((row, k) => {
            const start = parseInt(row[0]);
            const next = k + 1 < rows.length ? parseInt(rows[k + 1][0]) : 2900;
            const height = T[next] - T[start];
            if (!row[1]) {
                cells += `<div class="bg-[#fcfcfc]" style="height:${height}px"></div>`;
                return;
            }
            const catchup = row[0].endsWith('*');
            cells += `
            <div class="flex bg-[#c6cae1] border-t border-l border-[#e2e5f2] overflow-hidden" style="height:${height}px">
                <div class="w-[21px] shrink-0">
                    <div class="h-4 bg-[#8491b1] text-white/85 text-[12px] leading-4 text-center tracking-[0.5px]">${String(start % 100).padStart(2, '0')}</div>
                    ${catchup ? `<div class="h-[21px] bg-[#e3a55c] flex items-center justify-center">
                        <svg class="w-[14px] h-[14px]" viewBox="0 0 14 14"><circle cx="7" cy="7" r="6.2" fill="#fff8ea"/><path d="M5.2 4v6l4.6-3z" fill="#e3a04e"/></svg>
                    </div>` : ''}
                </div>
                <div class="relative ml-[9px] mt-[2px] mb-[7px] w-[104px] overflow-hidden whitespace-nowrap">
                    <div class="text-[13px] leading-[18px] font-bold text-[#4b5575]">${row[1].replaceAll('|', '<br>')}</div>
                    ${catchup ? '<div class="mt-[6px] w-[98px] h-[18px] bg-[#e3a55c] text-white text-[12px] leading-[18px] text-center">見逃し</div>' : ''}
                    ${row[2] ? `<div class="mt-[5px] text-[12px] leading-[15px] text-[#727a99]">${row[2].replaceAll('|', '<br>')}</div>` : ''}
                    <div class="absolute bottom-0 inset-x-0 h-[7px] bg-gradient-to-t from-[#c6cae1] to-[#c6cae1]/0"></div>
                </div>
            </div>`;
        });
        columns += `<div class="w-[139px]">${cells}</div>`;
    });
    document.getElementById('channels').innerHTML = heads;
    document.getElementById('table').innerHTML = columns;
</script>

</html>
